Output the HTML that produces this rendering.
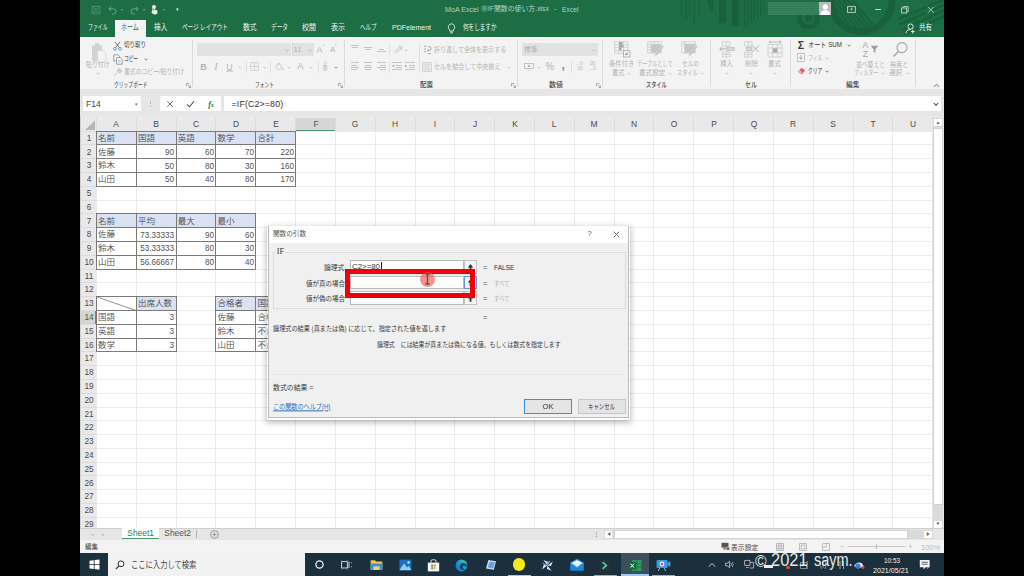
<!DOCTYPE html>
<html lang="ja"><head><meta charset="utf-8"><title>Excel IF</title>
<style>
html,body{margin:0;padding:0;background:#000;}
body{width:1024px;height:576px;overflow:hidden;position:relative;font-family:"Liberation Sans", "Noto Sans CJK JP", sans-serif;}
#root{position:absolute;left:0;top:0;width:1024px;height:576px;overflow:hidden;background:#000;}
.r{position:absolute;box-sizing:border-box;}
.t{position:absolute;white-space:nowrap;line-height:1;}
</style></head>
<body><div id="root">
<div class="r" style="left:80px;top:0px;width:864px;height:576px;background:#e6e6e6;"></div>
<div class="r" style="left:80px;top:0px;width:864px;height:36.5px;background:#1e6e45;"></div>
<div class="r" style="left:80px;top:36.5px;width:864px;height:52px;background:#f3f3f3;"></div>
<svg class="r" style="left:80px;top:0px;overflow:hidden;" width="864" height="36.5" viewBox="0 0 864 36.5"><rect x="600.6" y="0" width="1.1" height="14" fill="#19613d"/><rect x="605.2" y="0" width="1.1" height="19" fill="#19613d"/><rect x="609.0" y="0" width="1.1" height="16" fill="#19613d"/><rect x="613.6" y="0" width="1.3" height="23" fill="#19613d"/><rect x="618.4" y="0" width="1.3" height="16" fill="#19613d"/><rect x="639.0" y="0" width="7" height="23.4" fill="#19613d"/><rect x="652.0" y="0" width="6.8" height="26.5" fill="#19613d"/><rect x="664.0" y="0" width="1.6" height="25.8" fill="#19613d"/><rect x="667.3" y="0" width="1.6" height="24.2" fill="#19613d"/><rect x="670.4" y="0" width="1.6" height="22.7" fill="#19613d"/><rect x="673.4" y="0" width="1.5" height="20.3" fill="#19613d"/><rect x="676.8" y="0" width="1.4" height="18" fill="#19613d"/><rect x="680.0" y="0" width="1.3" height="14.8" fill="#19613d"/><rect x="683.2" y="0" width="1.2" height="11" fill="#19613d"/><path d="M627 0 H633.4 V12.6 Q629 8 627 0 Z" fill="#19613d"/><circle cx="728.4" cy="18" r="9" fill="none" stroke="#19613d" stroke-width="4.6"/><circle cx="728.4" cy="18" r="3.4" fill="#19613d"/><circle cx="781.5" cy="1" r="30.5" fill="none" stroke="#19613d" stroke-width="7"/><clipPath id="cp1"><circle cx="781.5" cy="1" r="26.4"/></clipPath><g clip-path="url(#cp1)"><path d="M746.0 -4 L778.0 35" stroke="#19613d" stroke-width="1.9"/><path d="M750.6 -4 L782.6 35" stroke="#19613d" stroke-width="1.9"/><path d="M755.2 -4 L787.2 35" stroke="#19613d" stroke-width="1.9"/><path d="M759.8 -4 L791.8 35" stroke="#19613d" stroke-width="1.9"/><path d="M764.4 -4 L796.4 35" stroke="#19613d" stroke-width="1.9"/><path d="M769.0 -4 L801.0 35" stroke="#19613d" stroke-width="1.9"/></g><g><path d="M870 -3.0 L818 19.0" stroke="#19613d" stroke-width="2.4"/><path d="M870 2.4 L820 24.4" stroke="#19613d" stroke-width="2.4"/><path d="M870 7.8 L822 29.8" stroke="#19613d" stroke-width="2.4"/><path d="M870 13.2 L824 35.2" stroke="#19613d" stroke-width="2.4"/></g></svg>
<svg class="r" style="left:91px;top:4.5px;" width="10" height="10" viewBox="0 0 10 10"><path d="M1.2 1.4 H8.8 V8.6 H1.2 Z M3 1.4 V4 H7 V1.4 M3 8.6 V6 H7 V8.6" fill="none" stroke="#4f9070" stroke-width="0.9"/></svg>
<svg class="r" style="left:107px;top:4.5px;" width="11" height="10" viewBox="0 0 11 10"><path d="M2 3.8 H6.3 A2.6 2.6 0 0 1 6.3 9 H5.2 M4 1.6 L1.8 3.8 L4 6" fill="none" stroke="#74ab8f" stroke-width="0.9"/></svg>
<span class="t" style="left:122px;top:9.5px;color:#74ab8f;transform:translate(-50%,-50%);transform-origin:50% 50%;font-size:4px;">▾</span>
<svg class="r" style="left:129px;top:4.5px;" width="11" height="10" viewBox="0 0 11 10"><path d="M9 3.8 H4.7 A2.6 2.6 0 0 0 4.7 9 H5.8 M7 1.6 L9.2 3.8 L7 6" fill="none" stroke="#74ab8f" stroke-width="0.9"/></svg>
<span class="t" style="left:144px;top:9.5px;color:#74ab8f;transform:translate(-50%,-50%);transform-origin:50% 50%;font-size:4px;">▾</span>
<svg class="r" style="left:149.5px;top:3.5px;" width="9" height="11" viewBox="0 0 9 11"><circle cx="4" cy="3" r="1.9" fill="#fff"/><path d="M2.6 4.5 V9.2 L1.6 8.4 M2.6 9.2 Q4.5 11 7 9.6 L7 6.6 L4.6 6.2 L4.6 4.5 Z" fill="#f0f5f2" stroke="#f0f5f2" stroke-width="0.7"/></svg>
<span class="t" style="left:163.8px;top:9.5px;color:#74ab8f;transform:translate(-50%,-50%);transform-origin:50% 50%;font-size:4px;">▾</span>
<span class="t" style="left:177px;top:9.8px;color:#e8f1ec;transform:translate(-50%,-50%);transform-origin:50% 50%;font-size:4.5px;">▾</span>
<span class="t" style="left:445px;top:9.6px;color:#b4d2c2;transform:translate(0,-50%) scaleX(0.937);transform-origin:0 50%;font-size:7.6px;">MoA Excel</span>
<span class="t" style="left:481px;top:9.5px;color:#b4d2c2;transform:translate(0,-50%) scaleX(0.969);transform-origin:0 50%;font-size:7.1px;">⑩IF関数の使い方.xlsx</span>
<span class="t" style="left:555.2px;top:9.4px;color:#b4d2c2;transform:translate(-50%,-50%);transform-origin:50% 50%;font-size:7.6px;">-</span>
<span class="t" style="left:561.6px;top:9.6px;color:#b4d2c2;transform:translate(0,-50%) scaleX(0.894);transform-origin:0 50%;font-size:7.6px;">Excel</span>
<div class="r" style="left:767.6px;top:2px;width:51.6px;height:13.4px;background:repeating-linear-gradient(180deg,#2f7a55 0px,#3f8763 1.1px,#2f7a55 2.2px);opacity:.95;"></div>
<div class="r" style="left:819px;top:2.1px;width:12.4px;height:13.4px;background:#bdbdbd;"></div>
<svg class="r" style="left:819px;top:2.1px;" width="12.4" height="13.4" viewBox="0 0 12.4 13.4"><circle cx="6.3" cy="4.8" r="2.6" fill="#fff"/><path d="M1.6 13.2 Q1.6 8 6.3 8 Q11 8 11 13.2 Z" fill="#fff"/></svg>
<svg class="r" style="left:846.5px;top:5.5px;" width="9" height="7" viewBox="0 0 9 7"><rect x="0.6" y="0.6" width="7.8" height="5.8" fill="none" stroke="#bdd7ca" stroke-width="0.9"/><path d="M4.5 4.8 V2.2 M3.2 3.4 L4.5 2.1 L5.8 3.4" stroke="#bdd7ca" stroke-width="0.8" fill="none"/></svg>
<div class="r" style="left:874.5px;top:9px;width:6.5px;height:0.9px;background:#bdd7ca;"></div>
<svg class="r" style="left:900.5px;top:5.5px;" width="8" height="8" viewBox="0 0 8 8"><rect x="0.6" y="2" width="5" height="5" fill="none" stroke="#bdd7ca" stroke-width="0.9"/><path d="M2.2 2 V0.6 H7.2 V5.6 H5.6" fill="none" stroke="#bdd7ca" stroke-width="0.9"/></svg>
<svg class="r" style="left:927px;top:5.5px;" width="8" height="8" viewBox="0 0 8 8"><path d="M0.8 0.8 L6.8 6.8 M6.8 0.8 L0.8 6.8" stroke="#bdd7ca" stroke-width="0.9"/></svg>
<div class="r" style="left:115px;top:19.5px;width:31.2px;height:17.2px;background:#f3f3f3;"></div>
<span class="t" style="left:87.5px;top:28px;color:#eef5f1;transform:translate(0,-50%) scaleX(0.642);transform-origin:0 50%;font-size:7.6px;">ファイル</span>
<span class="t" style="left:121.3px;top:28px;color:#2a7250;transform:translate(0,-50%) scaleX(0.784);transform-origin:0 50%;font-size:7.6px;">ホーム</span>
<span class="t" style="left:153.7px;top:28px;color:#eef5f1;transform:translate(0,-50%) scaleX(0.876);transform-origin:0 50%;font-size:7.6px;">挿入</span>
<span class="t" style="left:182.3px;top:28px;color:#eef5f1;transform:translate(0,-50%) scaleX(0.732);transform-origin:0 50%;font-size:7.6px;">ページ レイアウト</span>
<span class="t" style="left:242.6px;top:28px;color:#eef5f1;transform:translate(0,-50%) scaleX(0.895);transform-origin:0 50%;font-size:7.6px;">数式</span>
<span class="t" style="left:271.2px;top:28px;color:#eef5f1;transform:translate(0,-50%) scaleX(0.746);transform-origin:0 50%;font-size:7.6px;">データ</span>
<span class="t" style="left:302px;top:28px;color:#eef5f1;transform:translate(0,-50%) scaleX(0.922);transform-origin:0 50%;font-size:7.6px;">校閲</span>
<span class="t" style="left:331px;top:28px;color:#eef5f1;transform:translate(0,-50%) scaleX(0.922);transform-origin:0 50%;font-size:7.6px;">表示</span>
<span class="t" style="left:360px;top:28px;color:#eef5f1;transform:translate(0,-50%) scaleX(0.724);transform-origin:0 50%;font-size:7.6px;">ヘルプ</span>
<span class="t" style="left:392px;top:28px;color:#eef5f1;transform:translate(0,-50%) scaleX(0.924);transform-origin:0 50%;font-size:7.6px;">PDFelement</span>
<svg class="r" style="left:446.8px;top:22.6px;" width="9" height="11.5" viewBox="0 0 9 11.5"><path d="M4.5 0.8 A3.4 3.4 0 0 1 6.2 7 V8.2 H2.8 V7 A3.4 3.4 0 0 1 4.5 0.8 Z M3 9.8 H6" fill="none" stroke="#eef5f1" stroke-width="0.85"/></svg>
<span class="t" style="left:463px;top:28px;color:#eef5f1;transform:translate(0,-50%) scaleX(0.735);transform-origin:0 50%;font-size:7.6px;">何をしますか</span>
<svg class="r" style="left:905px;top:23.4px;" width="11" height="11" viewBox="0 0 11 11"><circle cx="5.6" cy="3.6" r="2.6" fill="none" stroke="#eef5f1" stroke-width="0.9"/><path d="M1 10.4 Q1.6 6.4 5.4 6.4 M7.8 6.6 V10.6 M5.8 8.6 H9.8" fill="none" stroke="#eef5f1" stroke-width="0.9"/></svg>
<span class="t" style="left:918.6px;top:28.2px;color:#eef5f1;transform:translate(0,-50%) scaleX(0.856);transform-origin:0 50%;font-size:7.6px;">共有</span>
<div class="r" style="left:192.1px;top:40px;width:1px;height:47px;background:#dadada;"></div>
<div class="r" style="left:344.0px;top:40px;width:1px;height:47px;background:#dadada;"></div>
<div class="r" style="left:516.9px;top:40px;width:1px;height:47px;background:#dadada;"></div>
<div class="r" style="left:601.7px;top:40px;width:1px;height:47px;background:#dadada;"></div>
<div class="r" style="left:709.5px;top:40px;width:1px;height:47px;background:#dadada;"></div>
<div class="r" style="left:790.0px;top:40px;width:1px;height:47px;background:#dadada;"></div>
<div class="r" style="left:915.1px;top:40px;width:1px;height:47px;background:#dadada;"></div>
<svg class="r" style="left:90px;top:41.5px;" width="18" height="22" viewBox="0 0 18 22"><path d="M2 3.5 H12 V19 H2 Z" fill="#d2d2d2"/><path d="M5 1.2 H9 V4.6 H5 Z" fill="#cfcfcf"/><path d="M7.5 8.5 H13.2 L16 11.3 V20.5 H7.5 Z" fill="#f4f4f4" stroke="#d6d6d6" stroke-width="0.8"/></svg>
<span class="t" style="left:86px;top:64.6px;color:#b4b4b4;transform:translate(0,-50%) scaleX(0.795);transform-origin:0 50%;font-size:7.4px;">貼り付け</span>
<svg class="r" style="left:96px;top:72.1px;" width="4" height="3" viewBox="0 0 4 3"><path d="M0.6 0.7 L2 2.2 L3.4 0.7" fill="none" stroke="#c2c2c2" stroke-width="0.75"/></svg>
<svg class="r" style="left:113px;top:40.5px;" width="9" height="10" viewBox="0 0 9 10"><path d="M2 0.8 L6.4 6.6 M7 0.8 L2.6 6.6" stroke="#555" stroke-width="0.8"/><circle cx="2" cy="7.8" r="1.4" fill="none" stroke="#4f86c6" stroke-width="0.8"/><circle cx="7" cy="7.8" r="1.4" fill="none" stroke="#4f86c6" stroke-width="0.8"/></svg>
<span class="t" style="left:124px;top:45.4px;color:#3a3a3a;transform:translate(0,-50%) scaleX(0.744);transform-origin:0 50%;font-size:7.4px;">切り取り</span>
<svg class="r" style="left:113px;top:53.5px;" width="10" height="11" viewBox="0 0 10 11"><path d="M0.8 0.8 H5 L6.4 2.2 V7 H0.8 Z" fill="#fff" stroke="#777" stroke-width="0.7"/><path d="M3.6 3.6 H7.6 L9.2 5.2 V10.2 H3.6 Z" fill="#fff" stroke="#777" stroke-width="0.7"/><path d="M5 6.4 H7.8 M5 8 H7.8" stroke="#6a9bd1" stroke-width="0.6"/></svg>
<span class="t" style="left:124px;top:59px;color:#3a3a3a;transform:translate(0,-50%) scaleX(0.631);transform-origin:0 50%;font-size:7.4px;">コピー</span>
<svg class="r" style="left:144.4px;top:58.0px;" width="4" height="3" viewBox="0 0 4 3"><path d="M0.6 0.7 L2 2.2 L3.4 0.7" fill="none" stroke="#666" stroke-width="0.75"/></svg>
<svg class="r" style="left:113px;top:66.5px;" width="10" height="10" viewBox="0 0 10 10"><path d="M1 8.8 L4.6 5.2 M4 3.4 L6.8 6.2 L9 4 L6.2 1.2 Z" fill="#cfcfcf" stroke="#bdbdbd" stroke-width="0.8"/></svg>
<span class="t" style="left:124px;top:72px;color:#b4b4b4;transform:translate(0,-50%) scaleX(0.790);transform-origin:0 50%;font-size:7.4px;">書式のコピー/貼り付け</span>
<span class="t" style="left:114px;top:85px;color:#4a4a4a;transform:translate(0,-50%) scaleX(0.647);transform-origin:0 50%;font-size:7.4px;">クリップボード</span>
<svg class="r" style="left:185.5px;top:83.0px;" width="5" height="5" viewBox="0 0 5 5"><path d="M0.5 3.2 V0.5 H3.2 M2 2 L4.4 4.4 M4.5 2.6 V4.5 H2.6" stroke="#8a8a8a" stroke-width="0.7" fill="none"/></svg>
<div class="r" style="left:197.2px;top:42.8px;width:94px;height:13.6px;background:#e2e2e2;"></div>
<div class="r" style="left:291.7px;top:42.8px;width:22px;height:13.6px;background:#e2e2e2;border-left:1px solid #d4d4d4;"></div>
<svg class="r" style="left:284.5px;top:48.6px;" width="4" height="3" viewBox="0 0 4 3"><path d="M0.6 0.7 L2 2.2 L3.4 0.7" fill="none" stroke="#b4b4b4" stroke-width="0.75"/></svg>
<span class="t" style="left:293.6px;top:50px;color:#b4b4b4;transform:translate(0,-50%);transform-origin:0 50%;font-size:7.800000000000001px;">11</span>
<svg class="r" style="left:307.5px;top:48.6px;" width="4" height="3" viewBox="0 0 4 3"><path d="M0.6 0.7 L2 2.2 L3.4 0.7" fill="none" stroke="#b4b4b4" stroke-width="0.75"/></svg>
<span class="t" style="left:319.6px;top:50px;color:#b4b4b4;transform:translate(-50%,-50%);transform-origin:50% 50%;font-size:9px;">A</span>
<span class="t" style="left:323.5px;top:46px;color:#b4b4b4;transform:translate(-50%,-50%);transform-origin:50% 50%;font-size:3.2px;">▴</span>
<span class="t" style="left:332.6px;top:50.4px;color:#b4b4b4;transform:translate(-50%,-50%);transform-origin:50% 50%;font-size:8px;">A</span>
<span class="t" style="left:336.4px;top:46px;color:#b4b4b4;transform:translate(-50%,-50%);transform-origin:50% 50%;font-size:3.2px;">▾</span>
<span class="t" style="left:203.4px;top:66.8px;color:#b4b4b4;transform:translate(-50%,-50%);transform-origin:50% 50%;font-size:9px;font-weight:bold;">B</span>
<span class="t" style="left:216px;top:66.8px;color:#b4b4b4;transform:translate(-50%,-50%);transform-origin:50% 50%;font-size:9px;font-family:'Liberation Serif',serif;font-style:italic;font-size:10px;">I</span>
<span class="t" style="left:229.6px;top:66.5px;color:#b4b4b4;transform:translate(-50%,-50%);transform-origin:50% 50%;font-size:9px;text-decoration:underline;">U</span>
<svg class="r" style="left:238px;top:66.0px;" width="4" height="3" viewBox="0 0 4 3"><path d="M0.6 0.7 L2 2.2 L3.4 0.7" fill="none" stroke="#c2c2c2" stroke-width="0.75"/></svg>
<div class="r" style="left:245.5px;top:61px;width:1px;height:12px;background:#e0e0e0;"></div>
<svg class="r" style="left:249.5px;top:62.3px;" width="9" height="9" viewBox="0 0 9 9"><path d="M0.6 0.6 H8.4 V8.4 H0.6 Z M4.5 0.6 V8.4 M0.6 4.5 H8.4" fill="none" stroke="#cdcdcd" stroke-width="0.8"/></svg>
<svg class="r" style="left:262.5px;top:66.0px;" width="4" height="3" viewBox="0 0 4 3"><path d="M0.6 0.7 L2 2.2 L3.4 0.7" fill="none" stroke="#c2c2c2" stroke-width="0.75"/></svg>
<div class="r" style="left:270.0px;top:61px;width:1px;height:12px;background:#e0e0e0;"></div>
<svg class="r" style="left:274px;top:61.5px;" width="10" height="10" viewBox="0 0 10 10"><path d="M4.6 1 L8.2 4.8 L4.6 8 L1.4 4.8 Z M4.6 1 V3.2 M8.6 6 Q9.6 7.6 8.6 8.2 Q7.6 7.6 8.6 6" fill="none" stroke="#c2c2c2" stroke-width="0.8"/></svg>
<svg class="r" style="left:287px;top:66.0px;" width="4" height="3" viewBox="0 0 4 3"><path d="M0.6 0.7 L2 2.2 L3.4 0.7" fill="none" stroke="#c2c2c2" stroke-width="0.75"/></svg>
<span class="t" style="left:300.5px;top:66.39999999999999px;color:#b4b4b4;transform:translate(-50%,-50%);transform-origin:50% 50%;font-size:9.4px;">A</span>
<svg class="r" style="left:308.8px;top:66.0px;" width="4" height="3" viewBox="0 0 4 3"><path d="M0.6 0.7 L2 2.2 L3.4 0.7" fill="none" stroke="#c2c2c2" stroke-width="0.75"/></svg>
<div class="r" style="left:317.5px;top:61px;width:1px;height:12px;background:#e0e0e0;"></div>
<span class="t" style="left:325px;top:63.5px;color:#b4b4b4;transform:translate(-50%,-50%);transform-origin:50% 50%;font-size:4.2px;">ア</span>
<span class="t" style="left:325px;top:69.4px;color:#b4b4b4;transform:translate(-50%,-50%);transform-origin:50% 50%;font-size:5.2px;">亜</span>
<svg class="r" style="left:333.6px;top:66.0px;" width="4" height="3" viewBox="0 0 4 3"><path d="M0.6 0.7 L2 2.2 L3.4 0.7" fill="none" stroke="#666" stroke-width="0.75"/></svg>
<span class="t" style="left:254.6px;top:85px;color:#4a4a4a;transform:translate(0,-50%) scaleX(0.642);transform-origin:0 50%;font-size:7.4px;">フォント</span>
<svg class="r" style="left:337.5px;top:83.0px;" width="5" height="5" viewBox="0 0 5 5"><path d="M0.5 3.2 V0.5 H3.2 M2 2 L4.4 4.4 M4.5 2.6 V4.5 H2.6" stroke="#8a8a8a" stroke-width="0.7" fill="none"/></svg>
<div class="r" style="left:350.6px;top:45.0px;width:8.6px;height:0.9px;background:#c4c4c4;"></div>
<div class="r" style="left:352.20000000000005px;top:47.1px;width:5.4px;height:0.9px;background:#c4c4c4;"></div>
<div class="r" style="left:363.8px;top:47.1px;width:8.6px;height:0.9px;background:#c4c4c4;"></div>
<div class="r" style="left:365.40000000000003px;top:49.2px;width:5.4px;height:0.9px;background:#c4c4c4;"></div>
<div class="r" style="left:378.6px;top:49.2px;width:5.4px;height:0.9px;background:#c4c4c4;"></div>
<div class="r" style="left:377px;top:51.300000000000004px;width:8.6px;height:0.9px;background:#c4c4c4;"></div>
<div class="r" style="left:388.5px;top:43px;width:1px;height:12px;background:#e0e0e0;"></div>
<svg class="r" style="left:392.5px;top:44.5px;" width="10" height="9" viewBox="0 0 10 9"><path d="M1 7.6 L6.6 2 M3 8.4 L8.2 3.2 M6 1.2 L9 2 L8.2 5" fill="none" stroke="#bdbdbd" stroke-width="0.9"/></svg>
<svg class="r" style="left:404px;top:48.6px;" width="4" height="3" viewBox="0 0 4 3"><path d="M0.6 0.7 L2 2.2 L3.4 0.7" fill="none" stroke="#c2c2c2" stroke-width="0.75"/></svg>
<div class="r" style="left:418.5px;top:43px;width:1px;height:30px;background:#e0e0e0;"></div>
<div class="r" style="left:350.6px;top:62.4px;width:8.6px;height:0.9px;background:#c4c4c4;"></div>
<div class="r" style="left:350.6px;top:64.5px;width:6px;height:0.9px;background:#c4c4c4;"></div>
<div class="r" style="left:350.6px;top:66.6px;width:8.6px;height:0.9px;background:#c4c4c4;"></div>
<div class="r" style="left:350.6px;top:68.7px;width:6px;height:0.9px;background:#c4c4c4;"></div>
<div class="r" style="left:363.8px;top:62.4px;width:8.6px;height:0.9px;background:#c4c4c4;"></div>
<div class="r" style="left:365.1px;top:64.5px;width:6px;height:0.9px;background:#c4c4c4;"></div>
<div class="r" style="left:363.8px;top:66.6px;width:8.6px;height:0.9px;background:#c4c4c4;"></div>
<div class="r" style="left:365.1px;top:68.7px;width:6px;height:0.9px;background:#c4c4c4;"></div>
<div class="r" style="left:377px;top:62.4px;width:8.6px;height:0.9px;background:#c4c4c4;"></div>
<div class="r" style="left:379.6px;top:64.5px;width:6px;height:0.9px;background:#c4c4c4;"></div>
<div class="r" style="left:377px;top:66.6px;width:8.6px;height:0.9px;background:#c4c4c4;"></div>
<div class="r" style="left:379.6px;top:68.7px;width:6px;height:0.9px;background:#c4c4c4;"></div>
<div class="r" style="left:388.5px;top:61px;width:1px;height:12px;background:#e0e0e0;"></div>
<div class="r" style="left:396.0px;top:62.4px;width:5.6px;height:0.9px;background:#c4c4c4;"></div>
<div class="r" style="left:396.0px;top:64.5px;width:5.6px;height:0.9px;background:#c4c4c4;"></div>
<div class="r" style="left:396.0px;top:66.6px;width:5.6px;height:0.9px;background:#c4c4c4;"></div>
<div class="r" style="left:396.0px;top:68.7px;width:5.6px;height:0.9px;background:#c4c4c4;"></div>
<div class="r" style="left:392.0px;top:62.4px;width:9.6px;height:0.9px;background:#c4c4c4;"></div>
<div class="r" style="left:392.0px;top:68.7px;width:9.6px;height:0.9px;background:#c4c4c4;"></div>
<span class="t" style="left:393.40000000000003px;top:66.0px;color:#6f8fb8;transform:translate(-50%,-50%);transform-origin:50% 50%;font-size:4.4px;">◂</span>
<div class="r" style="left:409.0px;top:62.4px;width:5.6px;height:0.9px;background:#c4c4c4;"></div>
<div class="r" style="left:409.0px;top:64.5px;width:5.6px;height:0.9px;background:#c4c4c4;"></div>
<div class="r" style="left:409.0px;top:66.6px;width:5.6px;height:0.9px;background:#c4c4c4;"></div>
<div class="r" style="left:409.0px;top:68.7px;width:5.6px;height:0.9px;background:#c4c4c4;"></div>
<div class="r" style="left:405.0px;top:62.4px;width:9.6px;height:0.9px;background:#c4c4c4;"></div>
<div class="r" style="left:405.0px;top:68.7px;width:9.6px;height:0.9px;background:#c4c4c4;"></div>
<span class="t" style="left:406.40000000000003px;top:66.0px;color:#6f8fb8;transform:translate(-50%,-50%);transform-origin:50% 50%;font-size:4.4px;">▸</span>
<svg class="r" style="left:422.5px;top:44.5px;" width="9" height="10" viewBox="0 0 9 10"><path d="M1 1.2 H3.4 M1 4 H3 M1 6.8 H3.4 M5 1.6 H6.2 A1.7 1.7 0 0 1 6.2 5.4 H4.6 M5.6 4.2 L4.4 5.4 L5.6 6.6 M5 8.6 H8" fill="none" stroke="#9f9f9f" stroke-width="0.9"/></svg>
<span class="t" style="left:434px;top:49.8px;color:#b4b4b4;transform:translate(0,-50%) scaleX(0.816);transform-origin:0 50%;font-size:7.4px;">折り返して全体を表示する</span>
<svg class="r" style="left:422px;top:62px;" width="10" height="10" viewBox="0 0 10 10"><path d="M0.6 0.6 H9.4 V9.4 H0.6 Z M0.6 3 H9.4 M0.6 7 H9.4 M3.6 0.6 V3 M6.6 0.6 V3 M3.6 7 V9.4 M6.6 7 V9.4" fill="none" stroke="#c4c4c4" stroke-width="0.7"/><path d="M2.4 5 H7.6" stroke="#bdbdbd" stroke-width="0.8"/></svg>
<span class="t" style="left:434px;top:67px;color:#b4b4b4;transform:translate(0,-50%) scaleX(0.820);transform-origin:0 50%;font-size:7.4px;">セルを結合して中央揃え</span>
<svg class="r" style="left:506.6px;top:66.0px;" width="4" height="3" viewBox="0 0 4 3"><path d="M0.6 0.7 L2 2.2 L3.4 0.7" fill="none" stroke="#c2c2c2" stroke-width="0.75"/></svg>
<span class="t" style="left:419.5px;top:85px;color:#4a4a4a;transform:translate(0,-50%) scaleX(0.885);transform-origin:0 50%;font-size:7.4px;font-weight:500;">配置</span>
<svg class="r" style="left:510.5px;top:83.0px;" width="5" height="5" viewBox="0 0 5 5"><path d="M0.5 3.2 V0.5 H3.2 M2 2 L4.4 4.4 M4.5 2.6 V4.5 H2.6" stroke="#8a8a8a" stroke-width="0.7" fill="none"/></svg>
<div class="r" style="left:522px;top:42.8px;width:76px;height:13.6px;background:#e2e2e2;"></div>
<span class="t" style="left:524px;top:49.8px;color:#b4b4b4;transform:translate(0,-50%) scaleX(0.906);transform-origin:0 50%;font-size:7.4px;">標準</span>
<svg class="r" style="left:591.5px;top:48.6px;" width="4" height="3" viewBox="0 0 4 3"><path d="M0.6 0.7 L2 2.2 L3.4 0.7" fill="none" stroke="#b4b4b4" stroke-width="0.75"/></svg>
<svg class="r" style="left:523.6px;top:62.6px;" width="10" height="8" viewBox="0 0 10 8"><rect x="0.5" y="0.5" width="9" height="5" fill="none" stroke="#b9b9b9" stroke-width="0.8"/><circle cx="5" cy="3" r="1.2" fill="#b9b9b9"/><path d="M3.4 7.4 H6.6" stroke="#cdcdcd" stroke-width="0.8"/></svg>
<svg class="r" style="left:537px;top:66.0px;" width="4" height="3" viewBox="0 0 4 3"><path d="M0.6 0.7 L2 2.2 L3.4 0.7" fill="none" stroke="#c2c2c2" stroke-width="0.75"/></svg>
<span class="t" style="left:550.2px;top:67.0px;color:#b4b4b4;transform:translate(-50%,-50%) scaleX(0.92);transform-origin:50% 50%;font-size:10.2px;">%</span>
<span class="t" style="left:563.2px;top:64.6px;color:#8a8a8a;transform:translate(-50%,-50%);transform-origin:50% 50%;font-size:12px;font-weight:bold;">,</span>
<div class="r" style="left:570.5px;top:61px;width:1px;height:12px;background:#e0e0e0;"></div>
<span class="t" style="left:579.2px;top:64.2px;color:#b4b4b4;transform:translate(-50%,-50%);transform-origin:50% 50%;font-size:4.6px;"><span style="font-size:3.6px">←</span>.0</span>
<span class="t" style="left:579.6px;top:69.4px;color:#b4b4b4;transform:translate(-50%,-50%);transform-origin:50% 50%;font-size:4.6px;">.00</span>
<span class="t" style="left:592.2px;top:64.2px;color:#b4b4b4;transform:translate(-50%,-50%);transform-origin:50% 50%;font-size:4.6px;">.00</span>
<span class="t" style="left:592.2px;top:69.4px;color:#b4b4b4;transform:translate(-50%,-50%);transform-origin:50% 50%;font-size:4.6px;"><span style="font-size:3.6px">→</span>.0</span>
<span class="t" style="left:548.5px;top:85px;color:#4a4a4a;transform:translate(0,-50%) scaleX(0.939);transform-origin:0 50%;font-size:7.4px;font-weight:500;">数値</span>
<svg class="r" style="left:595.5px;top:83.0px;" width="5" height="5" viewBox="0 0 5 5"><path d="M0.5 3.2 V0.5 H3.2 M2 2 L4.4 4.4 M4.5 2.6 V4.5 H2.6" stroke="#8a8a8a" stroke-width="0.7" fill="none"/></svg>
<svg class="r" style="left:613.6px;top:40.6px;" width="17" height="17" viewBox="0 0 17 17"><path d="M0.6 0.6 H14 V12.4 H0.6 Z M0.6 3.6 H14 M0.6 6.6 H14 M0.6 9.6 H14 M5 0.6 V12.4 M9.6 0.6 V12.4" fill="none" stroke="#c9c9c9" stroke-width="0.7"/><path d="M5 1 H8.4 V3.4 H5 Z M5 3.8 H9.4 V6.4 H5 Z M5 6.8 H7.4 V9.4 H5 Z" fill="#a8a8a8"/><rect x="9.4" y="9.8" width="6.6" height="6.2" fill="#f6f6f6" stroke="#9a9a9a" stroke-width="0.7"/><path d="M11 14.4 L14.4 11.2 M11.4 12.6 H14 M11.4 13.6 H14" stroke="#8a8a8a" stroke-width="0.6"/></svg>
<svg class="r" style="left:647px;top:41.4px;" width="17" height="17" viewBox="0 0 17 17"><path d="M0.6 0.6 H14.4 V12 H0.6 Z M0.6 3.4 H14.4 M0.6 6.2 H14.4 M0.6 9 H14.4 M4 0.6 V12 M7.6 0.6 V12 M11 0.6 V12" fill="none" stroke="#c9c9c9" stroke-width="0.7"/><path d="M4.2 3.6 H14.2 V11.8 H4.2 Z" fill="#c6c6c6"/><path d="M16 4 L10.4 10.4 L8 13.4 L7 15.4 L9.4 14.4 L12 12 L16.6 5.4 Z" fill="#bdbdbd" stroke="#f3f3f3" stroke-width="0.5"/></svg>
<svg class="r" style="left:681.4px;top:40.8px;" width="17" height="17" viewBox="0 0 17 17"><path d="M0.6 0.6 H14.4 V12 H0.6 Z M0.6 3 H14.4 M3.4 0.6 V12" fill="none" stroke="#c9c9c9" stroke-width="0.7"/><path d="M3.6 3.2 H14.2 V11.8 H3.6 Z" fill="#c6c6c6"/><path d="M16 4 L10.4 10.4 L8 13.4 L7 15.4 L9.4 14.4 L12 12 L16.6 5.4 Z" fill="#bdbdbd" stroke="#f3f3f3" stroke-width="0.5"/></svg>
<span class="t" style="left:608.6px;top:64.4px;color:#b4b4b4;transform:translate(0,-50%) scaleX(0.859);transform-origin:0 50%;font-size:7.4px;">条件付き</span>
<span class="t" style="left:612px;top:72.8px;color:#b4b4b4;transform:translate(0,-50%) scaleX(0.852);transform-origin:0 50%;font-size:7.4px;">書式</span>
<svg class="r" style="left:627.4px;top:71.8px;" width="4" height="3" viewBox="0 0 4 3"><path d="M0.6 0.7 L2 2.2 L3.4 0.7" fill="none" stroke="#c2c2c2" stroke-width="0.75"/></svg>
<span class="t" style="left:637.4px;top:64.4px;color:#b4b4b4;transform:translate(0,-50%) scaleX(0.697);transform-origin:0 50%;font-size:7.4px;">テーブルとして</span>
<span class="t" style="left:638.6px;top:72.8px;color:#b4b4b4;transform:translate(0,-50%) scaleX(0.893);transform-origin:0 50%;font-size:7.4px;">書式設定</span>
<svg class="r" style="left:668.4px;top:71.8px;" width="4" height="3" viewBox="0 0 4 3"><path d="M0.6 0.7 L2 2.2 L3.4 0.7" fill="none" stroke="#c2c2c2" stroke-width="0.75"/></svg>
<span class="t" style="left:682px;top:64.4px;color:#b4b4b4;transform:translate(0,-50%) scaleX(0.766);transform-origin:0 50%;font-size:7.4px;">セルの</span>
<span class="t" style="left:677px;top:72.8px;color:#b4b4b4;transform:translate(0,-50%) scaleX(0.696);transform-origin:0 50%;font-size:7.4px;">スタイル</span>
<svg class="r" style="left:700px;top:71.8px;" width="4" height="3" viewBox="0 0 4 3"><path d="M0.6 0.7 L2 2.2 L3.4 0.7" fill="none" stroke="#c2c2c2" stroke-width="0.75"/></svg>
<span class="t" style="left:645.6px;top:85px;color:#4a4a4a;transform:translate(0,-50%) scaleX(0.696);transform-origin:0 50%;font-size:7.4px;font-weight:500;">スタイル</span>
<svg class="r" style="left:719px;top:41px;" width="16" height="17" viewBox="0 0 16 17"><path d="M3.4 0.8 H11 V5 H3.4 Z M7.2 0.8 V5 M3.4 11 H11 V16 H3.4 Z M7.2 11 V16 M3.4 13.4 H11" fill="none" stroke="#c6c6c6" stroke-width="0.7"/><rect x="7.6" y="6.2" width="7.6" height="3.4" fill="#d8d8d8" stroke="#b5b5b5" stroke-width="0.6"/><path d="M7 7.9 H1 M3 5.8 L0.8 7.9 L3 10" fill="none" stroke="#ababab" stroke-width="0.9"/></svg>
<svg class="r" style="left:743px;top:41px;" width="17" height="17" viewBox="0 0 17 17"><path d="M1.4 0.8 H9 V5 H1.4 Z M5.2 0.8 V5 M1.4 11 H9 V16 H1.4 Z M5.2 11 V16 M1.4 13.4 H9" fill="none" stroke="#c6c6c6" stroke-width="0.7"/><rect x="3.4" y="6.2" width="5.6" height="3.4" fill="#d8d8d8" stroke="#b5b5b5" stroke-width="0.6"/><path d="M9.4 4.6 L15.8 11 M15.8 4.6 L9.4 11" stroke="#b0b0b0" stroke-width="1"/></svg>
<svg class="r" style="left:766.6px;top:40.4px;" width="16" height="18" viewBox="0 0 16 18"><path d="M1 4.4 H15 V17 H1 Z M1 8 H15 M1 13 H15 M5.4 4.4 V17 M10.6 4.4 V17" fill="none" stroke="#c6c6c6" stroke-width="0.7"/><rect x="5.8" y="8.4" width="4.4" height="4.2" fill="#a9a9a9"/><path d="M2 2 H14 M3.6 0.6 L2 2 L3.6 3.4 M12.4 0.6 L14 2 L12.4 3.4" fill="none" stroke="#ababab" stroke-width="0.8"/></svg>
<span class="t" style="left:720.4px;top:64.2px;color:#b4b4b4;transform:translate(0,-50%) scaleX(0.879);transform-origin:0 50%;font-size:7.4px;">挿入</span>
<svg class="r" style="left:725px;top:71.8px;" width="4" height="3" viewBox="0 0 4 3"><path d="M0.6 0.7 L2 2.2 L3.4 0.7" fill="none" stroke="#c2c2c2" stroke-width="0.75"/></svg>
<span class="t" style="left:744.6px;top:64.2px;color:#b4b4b4;transform:translate(0,-50%) scaleX(0.879);transform-origin:0 50%;font-size:7.4px;">削除</span>
<svg class="r" style="left:749.2px;top:71.8px;" width="4" height="3" viewBox="0 0 4 3"><path d="M0.6 0.7 L2 2.2 L3.4 0.7" fill="none" stroke="#c2c2c2" stroke-width="0.75"/></svg>
<span class="t" style="left:768px;top:64.2px;color:#b4b4b4;transform:translate(0,-50%) scaleX(0.879);transform-origin:0 50%;font-size:7.4px;">書式</span>
<svg class="r" style="left:772.5px;top:71.8px;" width="4" height="3" viewBox="0 0 4 3"><path d="M0.6 0.7 L2 2.2 L3.4 0.7" fill="none" stroke="#c2c2c2" stroke-width="0.75"/></svg>
<span class="t" style="left:744.6px;top:85.2px;color:#4a4a4a;transform:translate(0,-50%) scaleX(0.811);transform-origin:0 50%;font-size:7.4px;font-weight:500;">セル</span>
<span class="t" style="left:801px;top:44.6px;color:#3c3c3c;transform:translate(-50%,-50%);transform-origin:50% 50%;font-size:10.5px;font-weight:bold;">Σ</span>
<span class="t" style="left:808px;top:45px;color:#3a3a3a;transform:translate(0,-50%) scaleX(0.836);transform-origin:0 50%;font-size:7.4px;">オート SUM</span>
<svg class="r" style="left:846.6px;top:44.0px;" width="4" height="3" viewBox="0 0 4 3"><path d="M0.6 0.7 L2 2.2 L3.4 0.7" fill="none" stroke="#666" stroke-width="0.75"/></svg>
<svg class="r" style="left:797px;top:53.4px;" width="8" height="9" viewBox="0 0 8 9"><rect x="0.5" y="0.5" width="7" height="8" fill="#f8f8f8" stroke="#b4b4b4" stroke-width="0.8"/><path d="M4 2 V6.2 M2.2 4.6 L4 6.4 L5.8 4.6" fill="none" stroke="#9a9a9a" stroke-width="0.9"/></svg>
<span class="t" style="left:808px;top:58.2px;color:#b4b4b4;transform:translate(0,-50%) scaleX(0.654);transform-origin:0 50%;font-size:7.4px;">フィル</span>
<svg class="r" style="left:824.6px;top:57.2px;" width="4" height="3" viewBox="0 0 4 3"><path d="M0.6 0.7 L2 2.2 L3.4 0.7" fill="none" stroke="#c2c2c2" stroke-width="0.75"/></svg>
<svg class="r" style="left:796.6px;top:67px;" width="9" height="8" viewBox="0 0 9 8"><path d="M3.4 7 L0.8 4.4 L4.6 0.8 L8.2 3.6 L5 7 Z" fill="#e2616e"/><path d="M3.4 7 L0.8 4.4 L2.4 3 L5.2 5.6 Z" fill="#f3b3ba"/></svg>
<span class="t" style="left:808px;top:71.2px;color:#3a3a3a;transform:translate(0,-50%) scaleX(0.649);transform-origin:0 50%;font-size:7.4px;">クリア</span>
<svg class="r" style="left:825px;top:70.2px;" width="4" height="3" viewBox="0 0 4 3"><path d="M0.6 0.7 L2 2.2 L3.4 0.7" fill="none" stroke="#555" stroke-width="0.75"/></svg>
<span class="t" style="left:865.4px;top:45px;color:#a8a8a8;transform:translate(-50%,-50%);transform-origin:50% 50%;font-size:8.6px;">A</span>
<span class="t" style="left:865.4px;top:53.6px;color:#a8a8a8;transform:translate(-50%,-50%);transform-origin:50% 50%;font-size:8.6px;">Z</span>
<svg class="r" style="left:869.6px;top:45px;" width="9" height="9" viewBox="0 0 9 9"><path d="M0.6 0.8 H8.4 L5.4 4.2 V8 L3.6 6.8 V4.2 Z" fill="#9d9d9d"/></svg>
<span class="t" style="left:856px;top:64.6px;color:#b4b4b4;transform:translate(0,-50%) scaleX(0.784);transform-origin:0 50%;font-size:7.4px;">並べ替えと</span>
<span class="t" style="left:854.4px;top:72.8px;color:#b4b4b4;transform:translate(0,-50%) scaleX(0.657);transform-origin:0 50%;font-size:7.4px;">フィルター</span>
<svg class="r" style="left:881.4px;top:71.8px;" width="4" height="3" viewBox="0 0 4 3"><path d="M0.6 0.7 L2 2.2 L3.4 0.7" fill="none" stroke="#c2c2c2" stroke-width="0.75"/></svg>
<svg class="r" style="left:891.6px;top:40.6px;" width="17" height="17" viewBox="0 0 17 17"><circle cx="10" cy="6.6" r="5" fill="none" stroke="#a6a6a6" stroke-width="1.1"/><path d="M6.4 10.4 L1.4 15.6" stroke="#a6a6a6" stroke-width="1.5"/></svg>
<span class="t" style="left:890px;top:64.6px;color:#b4b4b4;transform:translate(0,-50%) scaleX(0.829);transform-origin:0 50%;font-size:7.4px;">検索と</span>
<span class="t" style="left:889.4px;top:72.8px;color:#b4b4b4;transform:translate(0,-50%) scaleX(0.892);transform-origin:0 50%;font-size:7.4px;">選択</span>
<svg class="r" style="left:905.6px;top:71.8px;" width="4" height="3" viewBox="0 0 4 3"><path d="M0.6 0.7 L2 2.2 L3.4 0.7" fill="none" stroke="#c2c2c2" stroke-width="0.75"/></svg>
<span class="t" style="left:846px;top:85.2px;color:#4a4a4a;transform:translate(0,-50%) scaleX(0.906);transform-origin:0 50%;font-size:7.4px;font-weight:500;">編集</span>
<svg class="r" style="left:932.6px;top:83.4px;" width="7" height="5" viewBox="0 0 7 5"><path d="M0.8 4 L3.5 1.2 L6.2 4" fill="none" stroke="#666" stroke-width="0.9"/></svg>
<div class="r" style="left:83px;top:96px;width:58px;height:15px;background:#fff;"></div>
<span class="t" style="left:86px;top:104px;color:#444;transform:translate(0,-50%);transform-origin:0 50%;font-size:8.5px;">F14</span>
<span class="t" style="left:136.5px;top:103.5px;color:#777;transform:translate(-50%,-50%);transform-origin:50% 50%;font-size:5px;">▾</span>
<div class="r" style="left:149.6px;top:100.6px;width:0.9px;height:0.9px;background:#aaa;"></div>
<div class="r" style="left:149.6px;top:103.1px;width:0.9px;height:0.9px;background:#aaa;"></div>
<div class="r" style="left:149.6px;top:105.6px;width:0.9px;height:0.9px;background:#aaa;"></div>
<div class="r" style="left:160px;top:96px;width:61px;height:15px;background:#fff;"></div>
<svg class="r" style="left:165.5px;top:99.5px;" width="8" height="8" viewBox="0 0 8 8"><path d="M1.2 1.2 L6.8 6.8 M6.8 1.2 L1.2 6.8" stroke="#666" stroke-width="0.9" fill="none"/></svg>
<svg class="r" style="left:186px;top:99.5px;" width="9" height="8" viewBox="0 0 9 8"><path d="M1 4.4 L3.4 6.8 L8 1.4" stroke="#555" stroke-width="1.1" fill="none"/></svg>
<span class="t" style="left:211px;top:103.5px;color:#2b7a54;transform:translate(-50%,-50%);transform-origin:50% 50%;font-size:8.5px;font-family:'Liberation Serif',serif;font-weight:bold;"><i>f</i><span style="font-size:5.5px">x</span></span>
<div class="r" style="left:224px;top:96px;width:717px;height:15px;background:#fff;"></div>
<span class="t" style="left:231.5px;top:104px;color:#333;transform:translate(0,-50%);transform-origin:0 50%;font-size:8.8px;letter-spacing:0.15px;">=IF(C2&gt;=80)</span>
<svg class="r" style="left:933px;top:101.6px;" width="6" height="5" viewBox="0 0 6 5"><path d="M0.8 1 L3 3.4 L5.2 1" fill="none" stroke="#555" stroke-width="1.1"/></svg>
<div class="r" style="left:80px;top:115.5px;width:852px;height:412.5px;background:#fff;"></div>
<div class="r" style="left:80px;top:115.5px;width:852px;height:15.699999999999989px;background:#e9e9e9;"></div>
<div class="r" style="left:80px;top:115.5px;width:16.5px;height:412.5px;background:#e9e9e9;"></div>
<div class="r" style="left:80px;top:115.5px;width:1.3px;height:412.5px;background:#d0d0d0;"></div>
<svg class="r" style="left:84px;top:120px;" width="12" height="11" viewBox="0 0 12 11"><path d="M11 0.5 L11 10 L1 10 Z" fill="#b5b5b5"/></svg>
<div class="r" style="left:295.6px;top:117.5px;width:39.82px;height:13.699999999999989px;background:#d6d6d6;"></div>
<div class="r" style="left:295.6px;top:129.89999999999998px;width:39.82px;height:1.3px;background:#4f9573;"></div>
<div class="r" style="left:81.3px;top:310.46999999999997px;width:15.2px;height:13.79px;background:#d5d5d5;"></div>
<div class="r" style="left:95.3px;top:310.46999999999997px;width:1.2px;height:13.79px;background:#4f9573;"></div>
<div class="r" style="left:96.00px;top:131.2px;width:1px;height:396.8px;background:#ececec"></div>
<div class="r" style="left:96.00px;top:117px;width:1px;height:14.199999999999989px;background:#dcdcdc"></div>
<div class="r" style="left:135.82px;top:131.2px;width:1px;height:396.8px;background:#ececec"></div>
<div class="r" style="left:135.82px;top:117px;width:1px;height:14.199999999999989px;background:#dcdcdc"></div>
<div class="r" style="left:175.64px;top:131.2px;width:1px;height:396.8px;background:#ececec"></div>
<div class="r" style="left:175.64px;top:117px;width:1px;height:14.199999999999989px;background:#dcdcdc"></div>
<div class="r" style="left:215.46px;top:131.2px;width:1px;height:396.8px;background:#ececec"></div>
<div class="r" style="left:215.46px;top:117px;width:1px;height:14.199999999999989px;background:#dcdcdc"></div>
<div class="r" style="left:255.28px;top:131.2px;width:1px;height:396.8px;background:#ececec"></div>
<div class="r" style="left:255.28px;top:117px;width:1px;height:14.199999999999989px;background:#dcdcdc"></div>
<div class="r" style="left:295.10px;top:131.2px;width:1px;height:396.8px;background:#ececec"></div>
<div class="r" style="left:295.10px;top:117px;width:1px;height:14.199999999999989px;background:#dcdcdc"></div>
<div class="r" style="left:334.92px;top:131.2px;width:1px;height:396.8px;background:#ececec"></div>
<div class="r" style="left:334.92px;top:117px;width:1px;height:14.199999999999989px;background:#dcdcdc"></div>
<div class="r" style="left:374.74px;top:131.2px;width:1px;height:396.8px;background:#ececec"></div>
<div class="r" style="left:374.74px;top:117px;width:1px;height:14.199999999999989px;background:#dcdcdc"></div>
<div class="r" style="left:414.56px;top:131.2px;width:1px;height:396.8px;background:#ececec"></div>
<div class="r" style="left:414.56px;top:117px;width:1px;height:14.199999999999989px;background:#dcdcdc"></div>
<div class="r" style="left:454.38px;top:131.2px;width:1px;height:396.8px;background:#ececec"></div>
<div class="r" style="left:454.38px;top:117px;width:1px;height:14.199999999999989px;background:#dcdcdc"></div>
<div class="r" style="left:494.20px;top:131.2px;width:1px;height:396.8px;background:#ececec"></div>
<div class="r" style="left:494.20px;top:117px;width:1px;height:14.199999999999989px;background:#dcdcdc"></div>
<div class="r" style="left:534.02px;top:131.2px;width:1px;height:396.8px;background:#ececec"></div>
<div class="r" style="left:534.02px;top:117px;width:1px;height:14.199999999999989px;background:#dcdcdc"></div>
<div class="r" style="left:573.84px;top:131.2px;width:1px;height:396.8px;background:#ececec"></div>
<div class="r" style="left:573.84px;top:117px;width:1px;height:14.199999999999989px;background:#dcdcdc"></div>
<div class="r" style="left:613.66px;top:131.2px;width:1px;height:396.8px;background:#ececec"></div>
<div class="r" style="left:613.66px;top:117px;width:1px;height:14.199999999999989px;background:#dcdcdc"></div>
<div class="r" style="left:653.48px;top:131.2px;width:1px;height:396.8px;background:#ececec"></div>
<div class="r" style="left:653.48px;top:117px;width:1px;height:14.199999999999989px;background:#dcdcdc"></div>
<div class="r" style="left:693.30px;top:131.2px;width:1px;height:396.8px;background:#ececec"></div>
<div class="r" style="left:693.30px;top:117px;width:1px;height:14.199999999999989px;background:#dcdcdc"></div>
<div class="r" style="left:733.12px;top:131.2px;width:1px;height:396.8px;background:#ececec"></div>
<div class="r" style="left:733.12px;top:117px;width:1px;height:14.199999999999989px;background:#dcdcdc"></div>
<div class="r" style="left:772.94px;top:131.2px;width:1px;height:396.8px;background:#ececec"></div>
<div class="r" style="left:772.94px;top:117px;width:1px;height:14.199999999999989px;background:#dcdcdc"></div>
<div class="r" style="left:812.76px;top:131.2px;width:1px;height:396.8px;background:#ececec"></div>
<div class="r" style="left:812.76px;top:117px;width:1px;height:14.199999999999989px;background:#dcdcdc"></div>
<div class="r" style="left:852.58px;top:131.2px;width:1px;height:396.8px;background:#ececec"></div>
<div class="r" style="left:852.58px;top:117px;width:1px;height:14.199999999999989px;background:#dcdcdc"></div>
<div class="r" style="left:892.40px;top:131.2px;width:1px;height:396.8px;background:#ececec"></div>
<div class="r" style="left:892.40px;top:117px;width:1px;height:14.199999999999989px;background:#dcdcdc"></div>
<div class="r" style="left:96.5px;top:130.70px;width:835.5px;height:1px;background:#ececec"></div>
<div class="r" style="left:81.3px;top:130.70px;width:15.2px;height:1px;background:#dcdcdc"></div>
<div class="r" style="left:96.5px;top:144.49px;width:835.5px;height:1px;background:#ececec"></div>
<div class="r" style="left:81.3px;top:144.49px;width:15.2px;height:1px;background:#dcdcdc"></div>
<div class="r" style="left:96.5px;top:158.28px;width:835.5px;height:1px;background:#ececec"></div>
<div class="r" style="left:81.3px;top:158.28px;width:15.2px;height:1px;background:#dcdcdc"></div>
<div class="r" style="left:96.5px;top:172.07px;width:835.5px;height:1px;background:#ececec"></div>
<div class="r" style="left:81.3px;top:172.07px;width:15.2px;height:1px;background:#dcdcdc"></div>
<div class="r" style="left:96.5px;top:185.86px;width:835.5px;height:1px;background:#ececec"></div>
<div class="r" style="left:81.3px;top:185.86px;width:15.2px;height:1px;background:#dcdcdc"></div>
<div class="r" style="left:96.5px;top:199.65px;width:835.5px;height:1px;background:#ececec"></div>
<div class="r" style="left:81.3px;top:199.65px;width:15.2px;height:1px;background:#dcdcdc"></div>
<div class="r" style="left:96.5px;top:213.44px;width:835.5px;height:1px;background:#ececec"></div>
<div class="r" style="left:81.3px;top:213.44px;width:15.2px;height:1px;background:#dcdcdc"></div>
<div class="r" style="left:96.5px;top:227.23px;width:835.5px;height:1px;background:#ececec"></div>
<div class="r" style="left:81.3px;top:227.23px;width:15.2px;height:1px;background:#dcdcdc"></div>
<div class="r" style="left:96.5px;top:241.02px;width:835.5px;height:1px;background:#ececec"></div>
<div class="r" style="left:81.3px;top:241.02px;width:15.2px;height:1px;background:#dcdcdc"></div>
<div class="r" style="left:96.5px;top:254.81px;width:835.5px;height:1px;background:#ececec"></div>
<div class="r" style="left:81.3px;top:254.81px;width:15.2px;height:1px;background:#dcdcdc"></div>
<div class="r" style="left:96.5px;top:268.60px;width:835.5px;height:1px;background:#ececec"></div>
<div class="r" style="left:81.3px;top:268.60px;width:15.2px;height:1px;background:#dcdcdc"></div>
<div class="r" style="left:96.5px;top:282.39px;width:835.5px;height:1px;background:#ececec"></div>
<div class="r" style="left:81.3px;top:282.39px;width:15.2px;height:1px;background:#dcdcdc"></div>
<div class="r" style="left:96.5px;top:296.18px;width:835.5px;height:1px;background:#ececec"></div>
<div class="r" style="left:81.3px;top:296.18px;width:15.2px;height:1px;background:#dcdcdc"></div>
<div class="r" style="left:96.5px;top:309.97px;width:835.5px;height:1px;background:#ececec"></div>
<div class="r" style="left:81.3px;top:309.97px;width:15.2px;height:1px;background:#dcdcdc"></div>
<div class="r" style="left:96.5px;top:323.76px;width:835.5px;height:1px;background:#ececec"></div>
<div class="r" style="left:81.3px;top:323.76px;width:15.2px;height:1px;background:#dcdcdc"></div>
<div class="r" style="left:96.5px;top:337.55px;width:835.5px;height:1px;background:#ececec"></div>
<div class="r" style="left:81.3px;top:337.55px;width:15.2px;height:1px;background:#dcdcdc"></div>
<div class="r" style="left:96.5px;top:351.34px;width:835.5px;height:1px;background:#ececec"></div>
<div class="r" style="left:81.3px;top:351.34px;width:15.2px;height:1px;background:#dcdcdc"></div>
<div class="r" style="left:96.5px;top:365.13px;width:835.5px;height:1px;background:#ececec"></div>
<div class="r" style="left:81.3px;top:365.13px;width:15.2px;height:1px;background:#dcdcdc"></div>
<div class="r" style="left:96.5px;top:378.92px;width:835.5px;height:1px;background:#ececec"></div>
<div class="r" style="left:81.3px;top:378.92px;width:15.2px;height:1px;background:#dcdcdc"></div>
<div class="r" style="left:96.5px;top:392.71px;width:835.5px;height:1px;background:#ececec"></div>
<div class="r" style="left:81.3px;top:392.71px;width:15.2px;height:1px;background:#dcdcdc"></div>
<div class="r" style="left:96.5px;top:406.50px;width:835.5px;height:1px;background:#ececec"></div>
<div class="r" style="left:81.3px;top:406.50px;width:15.2px;height:1px;background:#dcdcdc"></div>
<div class="r" style="left:96.5px;top:420.29px;width:835.5px;height:1px;background:#ececec"></div>
<div class="r" style="left:81.3px;top:420.29px;width:15.2px;height:1px;background:#dcdcdc"></div>
<div class="r" style="left:96.5px;top:434.08px;width:835.5px;height:1px;background:#ececec"></div>
<div class="r" style="left:81.3px;top:434.08px;width:15.2px;height:1px;background:#dcdcdc"></div>
<div class="r" style="left:96.5px;top:447.87px;width:835.5px;height:1px;background:#ececec"></div>
<div class="r" style="left:81.3px;top:447.87px;width:15.2px;height:1px;background:#dcdcdc"></div>
<div class="r" style="left:96.5px;top:461.66px;width:835.5px;height:1px;background:#ececec"></div>
<div class="r" style="left:81.3px;top:461.66px;width:15.2px;height:1px;background:#dcdcdc"></div>
<div class="r" style="left:96.5px;top:475.45px;width:835.5px;height:1px;background:#ececec"></div>
<div class="r" style="left:81.3px;top:475.45px;width:15.2px;height:1px;background:#dcdcdc"></div>
<div class="r" style="left:96.5px;top:489.24px;width:835.5px;height:1px;background:#ececec"></div>
<div class="r" style="left:81.3px;top:489.24px;width:15.2px;height:1px;background:#dcdcdc"></div>
<div class="r" style="left:96.5px;top:503.03px;width:835.5px;height:1px;background:#ececec"></div>
<div class="r" style="left:81.3px;top:503.03px;width:15.2px;height:1px;background:#dcdcdc"></div>
<div class="r" style="left:96.5px;top:516.82px;width:835.5px;height:1px;background:#ececec"></div>
<div class="r" style="left:81.3px;top:516.82px;width:15.2px;height:1px;background:#dcdcdc"></div>
<span class="t" style="left:116.41px;top:123.9px;color:#4a4a4a;transform:translate(-50%,-50%) scaleX(0.9);transform-origin:50% 50%;font-size:9.4px;">A</span>
<span class="t" style="left:156.23px;top:123.9px;color:#4a4a4a;transform:translate(-50%,-50%) scaleX(0.9);transform-origin:50% 50%;font-size:9.4px;">B</span>
<span class="t" style="left:196.04999999999998px;top:123.9px;color:#4a4a4a;transform:translate(-50%,-50%) scaleX(0.9);transform-origin:50% 50%;font-size:9.4px;">C</span>
<span class="t" style="left:235.87px;top:123.9px;color:#4a4a4a;transform:translate(-50%,-50%) scaleX(0.9);transform-origin:50% 50%;font-size:9.4px;">D</span>
<span class="t" style="left:275.69px;top:123.9px;color:#4a4a4a;transform:translate(-50%,-50%) scaleX(0.9);transform-origin:50% 50%;font-size:9.4px;">E</span>
<span class="t" style="left:315.51000000000005px;top:123.9px;color:#1f6b45;transform:translate(-50%,-50%) scaleX(0.9);transform-origin:50% 50%;font-size:9.4px;">F</span>
<span class="t" style="left:355.33000000000004px;top:123.9px;color:#4a4a4a;transform:translate(-50%,-50%) scaleX(0.9);transform-origin:50% 50%;font-size:9.4px;">G</span>
<span class="t" style="left:395.15000000000003px;top:123.9px;color:#4a4a4a;transform:translate(-50%,-50%) scaleX(0.9);transform-origin:50% 50%;font-size:9.4px;">H</span>
<span class="t" style="left:434.97px;top:123.9px;color:#4a4a4a;transform:translate(-50%,-50%) scaleX(0.9);transform-origin:50% 50%;font-size:9.4px;">I</span>
<span class="t" style="left:474.79px;top:123.9px;color:#4a4a4a;transform:translate(-50%,-50%) scaleX(0.9);transform-origin:50% 50%;font-size:9.4px;">J</span>
<span class="t" style="left:514.61px;top:123.9px;color:#4a4a4a;transform:translate(-50%,-50%) scaleX(0.9);transform-origin:50% 50%;font-size:9.4px;">K</span>
<span class="t" style="left:554.43px;top:123.9px;color:#4a4a4a;transform:translate(-50%,-50%) scaleX(0.9);transform-origin:50% 50%;font-size:9.4px;">L</span>
<span class="t" style="left:594.25px;top:123.9px;color:#4a4a4a;transform:translate(-50%,-50%) scaleX(0.9);transform-origin:50% 50%;font-size:9.4px;">M</span>
<span class="t" style="left:634.0699999999999px;top:123.9px;color:#4a4a4a;transform:translate(-50%,-50%) scaleX(0.9);transform-origin:50% 50%;font-size:9.4px;">N</span>
<span class="t" style="left:673.89px;top:123.9px;color:#4a4a4a;transform:translate(-50%,-50%) scaleX(0.9);transform-origin:50% 50%;font-size:9.4px;">O</span>
<span class="t" style="left:713.7099999999999px;top:123.9px;color:#4a4a4a;transform:translate(-50%,-50%) scaleX(0.9);transform-origin:50% 50%;font-size:9.4px;">P</span>
<span class="t" style="left:753.53px;top:123.9px;color:#4a4a4a;transform:translate(-50%,-50%) scaleX(0.9);transform-origin:50% 50%;font-size:9.4px;">Q</span>
<span class="t" style="left:793.35px;top:123.9px;color:#4a4a4a;transform:translate(-50%,-50%) scaleX(0.9);transform-origin:50% 50%;font-size:9.4px;">R</span>
<span class="t" style="left:833.17px;top:123.9px;color:#4a4a4a;transform:translate(-50%,-50%) scaleX(0.9);transform-origin:50% 50%;font-size:9.4px;">S</span>
<span class="t" style="left:872.99px;top:123.9px;color:#4a4a4a;transform:translate(-50%,-50%) scaleX(0.9);transform-origin:50% 50%;font-size:9.4px;">T</span>
<span class="t" style="left:912.81px;top:123.9px;color:#4a4a4a;transform:translate(-50%,-50%) scaleX(0.9);transform-origin:50% 50%;font-size:9.4px;">U</span>
<span class="t" style="left:88.6px;top:138.795px;color:#4a4a4a;transform:translate(-50%,-50%) scaleX(0.9);transform-origin:50% 50%;font-size:9.2px;">1</span>
<span class="t" style="left:88.6px;top:152.58499999999998px;color:#4a4a4a;transform:translate(-50%,-50%) scaleX(0.9);transform-origin:50% 50%;font-size:9.2px;">2</span>
<span class="t" style="left:88.6px;top:166.37499999999997px;color:#4a4a4a;transform:translate(-50%,-50%) scaleX(0.9);transform-origin:50% 50%;font-size:9.2px;">3</span>
<span class="t" style="left:88.6px;top:180.165px;color:#4a4a4a;transform:translate(-50%,-50%) scaleX(0.9);transform-origin:50% 50%;font-size:9.2px;">4</span>
<span class="t" style="left:88.6px;top:193.95499999999998px;color:#4a4a4a;transform:translate(-50%,-50%) scaleX(0.9);transform-origin:50% 50%;font-size:9.2px;">5</span>
<span class="t" style="left:88.6px;top:207.74499999999998px;color:#4a4a4a;transform:translate(-50%,-50%) scaleX(0.9);transform-origin:50% 50%;font-size:9.2px;">6</span>
<span class="t" style="left:88.6px;top:221.535px;color:#4a4a4a;transform:translate(-50%,-50%) scaleX(0.9);transform-origin:50% 50%;font-size:9.2px;">7</span>
<span class="t" style="left:88.6px;top:235.325px;color:#4a4a4a;transform:translate(-50%,-50%) scaleX(0.9);transform-origin:50% 50%;font-size:9.2px;">8</span>
<span class="t" style="left:88.6px;top:249.11499999999998px;color:#4a4a4a;transform:translate(-50%,-50%) scaleX(0.9);transform-origin:50% 50%;font-size:9.2px;">9</span>
<span class="t" style="left:88.6px;top:262.905px;color:#4a4a4a;transform:translate(-50%,-50%) scaleX(0.9);transform-origin:50% 50%;font-size:9.2px;">10</span>
<span class="t" style="left:88.6px;top:276.69499999999994px;color:#4a4a4a;transform:translate(-50%,-50%) scaleX(0.9);transform-origin:50% 50%;font-size:9.2px;">11</span>
<span class="t" style="left:88.6px;top:290.48499999999996px;color:#4a4a4a;transform:translate(-50%,-50%) scaleX(0.9);transform-origin:50% 50%;font-size:9.2px;">12</span>
<span class="t" style="left:88.6px;top:304.2749999999999px;color:#4a4a4a;transform:translate(-50%,-50%) scaleX(0.9);transform-origin:50% 50%;font-size:9.2px;">13</span>
<span class="t" style="left:88.6px;top:318.06499999999994px;color:#1f6b45;transform:translate(-50%,-50%) scaleX(0.9);transform-origin:50% 50%;font-size:9.2px;">14</span>
<span class="t" style="left:88.6px;top:331.85499999999996px;color:#4a4a4a;transform:translate(-50%,-50%) scaleX(0.9);transform-origin:50% 50%;font-size:9.2px;">15</span>
<span class="t" style="left:88.6px;top:345.6449999999999px;color:#4a4a4a;transform:translate(-50%,-50%) scaleX(0.9);transform-origin:50% 50%;font-size:9.2px;">16</span>
<span class="t" style="left:88.6px;top:359.43499999999995px;color:#4a4a4a;transform:translate(-50%,-50%) scaleX(0.9);transform-origin:50% 50%;font-size:9.2px;">17</span>
<span class="t" style="left:88.6px;top:373.22499999999997px;color:#4a4a4a;transform:translate(-50%,-50%) scaleX(0.9);transform-origin:50% 50%;font-size:9.2px;">18</span>
<span class="t" style="left:88.6px;top:387.01499999999993px;color:#4a4a4a;transform:translate(-50%,-50%) scaleX(0.9);transform-origin:50% 50%;font-size:9.2px;">19</span>
<span class="t" style="left:88.6px;top:400.80499999999995px;color:#4a4a4a;transform:translate(-50%,-50%) scaleX(0.9);transform-origin:50% 50%;font-size:9.2px;">20</span>
<span class="t" style="left:88.6px;top:414.5949999999999px;color:#4a4a4a;transform:translate(-50%,-50%) scaleX(0.9);transform-origin:50% 50%;font-size:9.2px;">21</span>
<span class="t" style="left:88.6px;top:428.38499999999993px;color:#4a4a4a;transform:translate(-50%,-50%) scaleX(0.9);transform-origin:50% 50%;font-size:9.2px;">22</span>
<span class="t" style="left:88.6px;top:442.17499999999995px;color:#4a4a4a;transform:translate(-50%,-50%) scaleX(0.9);transform-origin:50% 50%;font-size:9.2px;">23</span>
<span class="t" style="left:88.6px;top:455.9649999999999px;color:#4a4a4a;transform:translate(-50%,-50%) scaleX(0.9);transform-origin:50% 50%;font-size:9.2px;">24</span>
<span class="t" style="left:88.6px;top:469.75499999999994px;color:#4a4a4a;transform:translate(-50%,-50%) scaleX(0.9);transform-origin:50% 50%;font-size:9.2px;">25</span>
<span class="t" style="left:88.6px;top:483.54499999999996px;color:#4a4a4a;transform:translate(-50%,-50%) scaleX(0.9);transform-origin:50% 50%;font-size:9.2px;">26</span>
<span class="t" style="left:88.6px;top:497.3349999999999px;color:#4a4a4a;transform:translate(-50%,-50%) scaleX(0.9);transform-origin:50% 50%;font-size:9.2px;">27</span>
<span class="t" style="left:88.6px;top:511.12499999999994px;color:#4a4a4a;transform:translate(-50%,-50%) scaleX(0.9);transform-origin:50% 50%;font-size:9.2px;">28</span>
<span class="t" style="left:88.6px;top:524.915px;color:#4a4a4a;transform:translate(-50%,-50%) scaleX(0.9);transform-origin:50% 50%;font-size:9.2px;">29</span>
<div class="r" style="left:96.5px;top:131.2px;width:39.82px;height:13.79px;background:#d9e1f2;"></div>
<div class="r" style="left:136.32px;top:131.2px;width:39.82px;height:13.79px;background:#d9e1f2;"></div>
<div class="r" style="left:176.14px;top:131.2px;width:39.82px;height:13.79px;background:#d9e1f2;"></div>
<div class="r" style="left:215.96px;top:131.2px;width:39.82px;height:13.79px;background:#d9e1f2;"></div>
<div class="r" style="left:255.78px;top:131.2px;width:39.82px;height:13.79px;background:#d9e1f2;"></div>
<div class="r" style="left:96.0px;top:130.7px;width:40.82px;height:14.79px;border:1px solid #7a7a7a;"></div>
<div class="r" style="left:135.82px;top:130.7px;width:40.82px;height:14.79px;border:1px solid #7a7a7a;"></div>
<div class="r" style="left:175.64px;top:130.7px;width:40.82px;height:14.79px;border:1px solid #7a7a7a;"></div>
<div class="r" style="left:215.46px;top:130.7px;width:40.82px;height:14.79px;border:1px solid #7a7a7a;"></div>
<div class="r" style="left:255.28px;top:130.7px;width:40.82px;height:14.79px;border:1px solid #7a7a7a;"></div>
<div class="r" style="left:96.0px;top:144.49px;width:40.82px;height:14.79px;border:1px solid #7a7a7a;"></div>
<div class="r" style="left:135.82px;top:144.49px;width:40.82px;height:14.79px;border:1px solid #7a7a7a;"></div>
<div class="r" style="left:175.64px;top:144.49px;width:40.82px;height:14.79px;border:1px solid #7a7a7a;"></div>
<div class="r" style="left:215.46px;top:144.49px;width:40.82px;height:14.79px;border:1px solid #7a7a7a;"></div>
<div class="r" style="left:255.28px;top:144.49px;width:40.82px;height:14.79px;border:1px solid #7a7a7a;"></div>
<div class="r" style="left:96.0px;top:158.28px;width:40.82px;height:14.79px;border:1px solid #7a7a7a;"></div>
<div class="r" style="left:135.82px;top:158.28px;width:40.82px;height:14.79px;border:1px solid #7a7a7a;"></div>
<div class="r" style="left:175.64px;top:158.28px;width:40.82px;height:14.79px;border:1px solid #7a7a7a;"></div>
<div class="r" style="left:215.46px;top:158.28px;width:40.82px;height:14.79px;border:1px solid #7a7a7a;"></div>
<div class="r" style="left:255.28px;top:158.28px;width:40.82px;height:14.79px;border:1px solid #7a7a7a;"></div>
<div class="r" style="left:96.0px;top:172.07px;width:40.82px;height:14.79px;border:1px solid #7a7a7a;"></div>
<div class="r" style="left:135.82px;top:172.07px;width:40.82px;height:14.79px;border:1px solid #7a7a7a;"></div>
<div class="r" style="left:175.64px;top:172.07px;width:40.82px;height:14.79px;border:1px solid #7a7a7a;"></div>
<div class="r" style="left:215.46px;top:172.07px;width:40.82px;height:14.79px;border:1px solid #7a7a7a;"></div>
<div class="r" style="left:255.28px;top:172.07px;width:40.82px;height:14.79px;border:1px solid #7a7a7a;"></div>
<span class="t" style="left:98.1px;top:137.79px;color:#4d4d4d;transform:translate(0,-50%);transform-origin:0 50%;font-size:8.5px;font-weight:350;">名前</span>
<span class="t" style="left:137.92px;top:137.79px;color:#4d4d4d;transform:translate(0,-50%);transform-origin:0 50%;font-size:8.5px;font-weight:350;">国語</span>
<span class="t" style="left:177.74px;top:137.79px;color:#4d4d4d;transform:translate(0,-50%);transform-origin:0 50%;font-size:8.5px;font-weight:350;">英語</span>
<span class="t" style="left:217.56px;top:137.79px;color:#4d4d4d;transform:translate(0,-50%);transform-origin:0 50%;font-size:8.5px;font-weight:350;">数学</span>
<span class="t" style="left:257.38px;top:137.79px;color:#4d4d4d;transform:translate(0,-50%);transform-origin:0 50%;font-size:8.5px;font-weight:350;">合計</span>
<span class="t" style="left:98.1px;top:151.58px;color:#4d4d4d;transform:translate(0,-50%);transform-origin:0 50%;font-size:8.5px;font-weight:350;">佐藤</span>
<span class="t" style="left:174.14px;top:152.78px;color:#525252;transform:translate(-100%,-50%) scaleX(0.87);transform-origin:100% 50%;font-size:9.3px;">90</span>
<span class="t" style="left:213.96px;top:152.78px;color:#525252;transform:translate(-100%,-50%) scaleX(0.87);transform-origin:100% 50%;font-size:9.3px;">60</span>
<span class="t" style="left:253.78px;top:152.78px;color:#525252;transform:translate(-100%,-50%) scaleX(0.87);transform-origin:100% 50%;font-size:9.3px;">70</span>
<span class="t" style="left:293.6px;top:152.78px;color:#525252;transform:translate(-100%,-50%) scaleX(0.87);transform-origin:100% 50%;font-size:9.3px;">220</span>
<span class="t" style="left:98.1px;top:165.37px;color:#4d4d4d;transform:translate(0,-50%);transform-origin:0 50%;font-size:8.5px;font-weight:350;">鈴木</span>
<span class="t" style="left:174.14px;top:166.57px;color:#525252;transform:translate(-100%,-50%) scaleX(0.87);transform-origin:100% 50%;font-size:9.3px;">50</span>
<span class="t" style="left:213.96px;top:166.57px;color:#525252;transform:translate(-100%,-50%) scaleX(0.87);transform-origin:100% 50%;font-size:9.3px;">80</span>
<span class="t" style="left:253.78px;top:166.57px;color:#525252;transform:translate(-100%,-50%) scaleX(0.87);transform-origin:100% 50%;font-size:9.3px;">30</span>
<span class="t" style="left:293.6px;top:166.57px;color:#525252;transform:translate(-100%,-50%) scaleX(0.87);transform-origin:100% 50%;font-size:9.3px;">160</span>
<span class="t" style="left:98.1px;top:179.16px;color:#4d4d4d;transform:translate(0,-50%);transform-origin:0 50%;font-size:8.5px;font-weight:350;">山田</span>
<span class="t" style="left:174.14px;top:180.37px;color:#525252;transform:translate(-100%,-50%) scaleX(0.87);transform-origin:100% 50%;font-size:9.3px;">50</span>
<span class="t" style="left:213.96px;top:180.37px;color:#525252;transform:translate(-100%,-50%) scaleX(0.87);transform-origin:100% 50%;font-size:9.3px;">40</span>
<span class="t" style="left:253.78px;top:180.37px;color:#525252;transform:translate(-100%,-50%) scaleX(0.87);transform-origin:100% 50%;font-size:9.3px;">80</span>
<span class="t" style="left:293.6px;top:180.37px;color:#525252;transform:translate(-100%,-50%) scaleX(0.87);transform-origin:100% 50%;font-size:9.3px;">170</span>
<div class="r" style="left:96.5px;top:213.94px;width:39.82px;height:13.79px;background:#d9e1f2;"></div>
<div class="r" style="left:136.32px;top:213.94px;width:39.82px;height:13.79px;background:#d9e1f2;"></div>
<div class="r" style="left:176.14px;top:213.94px;width:39.82px;height:13.79px;background:#d9e1f2;"></div>
<div class="r" style="left:215.96px;top:213.94px;width:39.82px;height:13.79px;background:#d9e1f2;"></div>
<div class="r" style="left:96.0px;top:213.44px;width:40.82px;height:14.79px;border:1px solid #7a7a7a;"></div>
<div class="r" style="left:135.82px;top:213.44px;width:40.82px;height:14.79px;border:1px solid #7a7a7a;"></div>
<div class="r" style="left:175.64px;top:213.44px;width:40.82px;height:14.79px;border:1px solid #7a7a7a;"></div>
<div class="r" style="left:215.46px;top:213.44px;width:40.82px;height:14.79px;border:1px solid #7a7a7a;"></div>
<div class="r" style="left:96.0px;top:227.23px;width:40.82px;height:14.79px;border:1px solid #7a7a7a;"></div>
<div class="r" style="left:135.82px;top:227.23px;width:40.82px;height:14.79px;border:1px solid #7a7a7a;"></div>
<div class="r" style="left:175.64px;top:227.23px;width:40.82px;height:14.79px;border:1px solid #7a7a7a;"></div>
<div class="r" style="left:215.46px;top:227.23px;width:40.82px;height:14.79px;border:1px solid #7a7a7a;"></div>
<div class="r" style="left:96.0px;top:241.02px;width:40.82px;height:14.79px;border:1px solid #7a7a7a;"></div>
<div class="r" style="left:135.82px;top:241.02px;width:40.82px;height:14.79px;border:1px solid #7a7a7a;"></div>
<div class="r" style="left:175.64px;top:241.02px;width:40.82px;height:14.79px;border:1px solid #7a7a7a;"></div>
<div class="r" style="left:215.46px;top:241.02px;width:40.82px;height:14.79px;border:1px solid #7a7a7a;"></div>
<div class="r" style="left:96.0px;top:254.81px;width:40.82px;height:14.79px;border:1px solid #7a7a7a;"></div>
<div class="r" style="left:135.82px;top:254.81px;width:40.82px;height:14.79px;border:1px solid #7a7a7a;"></div>
<div class="r" style="left:175.64px;top:254.81px;width:40.82px;height:14.79px;border:1px solid #7a7a7a;"></div>
<div class="r" style="left:215.46px;top:254.81px;width:40.82px;height:14.79px;border:1px solid #7a7a7a;"></div>
<span class="t" style="left:98.1px;top:220.53px;color:#4d4d4d;transform:translate(0,-50%);transform-origin:0 50%;font-size:8.5px;font-weight:350;">名前</span>
<span class="t" style="left:137.92px;top:220.53px;color:#4d4d4d;transform:translate(0,-50%);transform-origin:0 50%;font-size:8.5px;font-weight:350;">平均</span>
<span class="t" style="left:177.74px;top:220.53px;color:#4d4d4d;transform:translate(0,-50%);transform-origin:0 50%;font-size:8.5px;font-weight:350;">最大</span>
<span class="t" style="left:217.56px;top:220.53px;color:#4d4d4d;transform:translate(0,-50%);transform-origin:0 50%;font-size:8.5px;font-weight:350;">最小</span>
<span class="t" style="left:98.1px;top:234.32px;color:#4d4d4d;transform:translate(0,-50%);transform-origin:0 50%;font-size:8.5px;font-weight:350;">佐藤</span>
<span class="t" style="left:174.14px;top:235.53px;color:#525252;transform:translate(-100%,-50%) scaleX(0.87);transform-origin:100% 50%;font-size:9.3px;">73.33333</span>
<span class="t" style="left:213.96px;top:235.53px;color:#525252;transform:translate(-100%,-50%) scaleX(0.87);transform-origin:100% 50%;font-size:9.3px;">90</span>
<span class="t" style="left:253.78px;top:235.53px;color:#525252;transform:translate(-100%,-50%) scaleX(0.87);transform-origin:100% 50%;font-size:9.3px;">60</span>
<span class="t" style="left:98.1px;top:248.11px;color:#4d4d4d;transform:translate(0,-50%);transform-origin:0 50%;font-size:8.5px;font-weight:350;">鈴木</span>
<span class="t" style="left:174.14px;top:249.31px;color:#525252;transform:translate(-100%,-50%) scaleX(0.87);transform-origin:100% 50%;font-size:9.3px;">53.33333</span>
<span class="t" style="left:213.96px;top:249.31px;color:#525252;transform:translate(-100%,-50%) scaleX(0.87);transform-origin:100% 50%;font-size:9.3px;">80</span>
<span class="t" style="left:253.78px;top:249.31px;color:#525252;transform:translate(-100%,-50%) scaleX(0.87);transform-origin:100% 50%;font-size:9.3px;">30</span>
<span class="t" style="left:98.1px;top:261.9px;color:#4d4d4d;transform:translate(0,-50%);transform-origin:0 50%;font-size:8.5px;font-weight:350;">山田</span>
<span class="t" style="left:174.14px;top:263.1px;color:#525252;transform:translate(-100%,-50%) scaleX(0.87);transform-origin:100% 50%;font-size:9.3px;">56.66667</span>
<span class="t" style="left:213.96px;top:263.1px;color:#525252;transform:translate(-100%,-50%) scaleX(0.87);transform-origin:100% 50%;font-size:9.3px;">80</span>
<span class="t" style="left:253.78px;top:263.1px;color:#525252;transform:translate(-100%,-50%) scaleX(0.87);transform-origin:100% 50%;font-size:9.3px;">40</span>
<div class="r" style="left:136.32px;top:296.68px;width:39.82px;height:13.79px;background:#d9e1f2;"></div>
<div class="r" style="left:96.0px;top:296.18px;width:40.82px;height:14.79px;border:1px solid #7a7a7a;"></div>
<div class="r" style="left:135.82px;top:296.18px;width:40.82px;height:14.79px;border:1px solid #7a7a7a;"></div>
<div class="r" style="left:96.0px;top:309.97px;width:40.82px;height:14.79px;border:1px solid #7a7a7a;"></div>
<div class="r" style="left:135.82px;top:309.97px;width:40.82px;height:14.79px;border:1px solid #7a7a7a;"></div>
<div class="r" style="left:96.0px;top:323.76px;width:40.82px;height:14.79px;border:1px solid #7a7a7a;"></div>
<div class="r" style="left:135.82px;top:323.76px;width:40.82px;height:14.79px;border:1px solid #7a7a7a;"></div>
<div class="r" style="left:96.0px;top:337.55px;width:40.82px;height:14.79px;border:1px solid #7a7a7a;"></div>
<div class="r" style="left:135.82px;top:337.55px;width:40.82px;height:14.79px;border:1px solid #7a7a7a;"></div>
<span class="t" style="left:137.92px;top:303.27px;color:#4d4d4d;transform:translate(0,-50%);transform-origin:0 50%;font-size:8.5px;font-weight:350;">出席人数</span>
<span class="t" style="left:98.1px;top:317.06px;color:#4d4d4d;transform:translate(0,-50%);transform-origin:0 50%;font-size:8.5px;font-weight:350;">国語</span>
<span class="t" style="left:174.14px;top:318.26px;color:#525252;transform:translate(-100%,-50%) scaleX(0.87);transform-origin:100% 50%;font-size:9.3px;">3</span>
<span class="t" style="left:98.1px;top:330.85px;color:#4d4d4d;transform:translate(0,-50%);transform-origin:0 50%;font-size:8.5px;font-weight:350;">英語</span>
<span class="t" style="left:174.14px;top:332.05px;color:#525252;transform:translate(-100%,-50%) scaleX(0.87);transform-origin:100% 50%;font-size:9.3px;">3</span>
<span class="t" style="left:98.1px;top:344.64px;color:#4d4d4d;transform:translate(0,-50%);transform-origin:0 50%;font-size:8.5px;font-weight:350;">数学</span>
<span class="t" style="left:174.14px;top:345.84px;color:#525252;transform:translate(-100%,-50%) scaleX(0.87);transform-origin:100% 50%;font-size:9.3px;">3</span>
<svg class="r" style="left:96.5px;top:296.68px;" width="39.82" height="13.79" viewBox="0 0 39.82 13.79"><path d="M0 0 L39.82 13.79" stroke="#7a7a7a" stroke-width="0.8"/></svg>
<div class="r" style="left:215.96px;top:296.68px;width:39.82px;height:13.79px;background:#d9e1f2;"></div>
<div class="r" style="left:255.78px;top:296.68px;width:39.82px;height:13.79px;background:#d9e1f2;"></div>
<div class="r" style="left:215.46px;top:296.18px;width:40.82px;height:14.79px;border:1px solid #7a7a7a;"></div>
<div class="r" style="left:255.28px;top:296.18px;width:40.82px;height:14.79px;border:1px solid #7a7a7a;"></div>
<div class="r" style="left:215.46px;top:309.97px;width:40.82px;height:14.79px;border:1px solid #7a7a7a;"></div>
<div class="r" style="left:255.28px;top:309.97px;width:40.82px;height:14.79px;border:1px solid #7a7a7a;"></div>
<div class="r" style="left:215.46px;top:323.76px;width:40.82px;height:14.79px;border:1px solid #7a7a7a;"></div>
<div class="r" style="left:255.28px;top:323.76px;width:40.82px;height:14.79px;border:1px solid #7a7a7a;"></div>
<div class="r" style="left:215.46px;top:337.55px;width:40.82px;height:14.79px;border:1px solid #7a7a7a;"></div>
<div class="r" style="left:255.28px;top:337.55px;width:40.82px;height:14.79px;border:1px solid #7a7a7a;"></div>
<span class="t" style="left:217.56px;top:303.27px;color:#4d4d4d;transform:translate(0,-50%);transform-origin:0 50%;font-size:8.5px;font-weight:350;">合格者</span>
<span class="t" style="left:257.38px;top:303.27px;color:#4d4d4d;transform:translate(0,-50%);transform-origin:0 50%;font-size:8.5px;font-weight:350;">国語</span>
<span class="t" style="left:217.56px;top:317.06px;color:#4d4d4d;transform:translate(0,-50%);transform-origin:0 50%;font-size:8.5px;font-weight:350;">佐藤</span>
<span class="t" style="left:257.38px;top:317.06px;color:#4d4d4d;transform:translate(0,-50%);transform-origin:0 50%;font-size:8.5px;font-weight:350;">合格</span>
<span class="t" style="left:217.56px;top:330.85px;color:#4d4d4d;transform:translate(0,-50%);transform-origin:0 50%;font-size:8.5px;font-weight:350;">鈴木</span>
<span class="t" style="left:257.38px;top:330.85px;color:#4d4d4d;transform:translate(0,-50%);transform-origin:0 50%;font-size:8.5px;font-weight:350;">不合格</span>
<span class="t" style="left:217.56px;top:344.64px;color:#4d4d4d;transform:translate(0,-50%);transform-origin:0 50%;font-size:8.5px;font-weight:350;">山田</span>
<span class="t" style="left:257.38px;top:344.64px;color:#4d4d4d;transform:translate(0,-50%);transform-origin:0 50%;font-size:8.5px;font-weight:350;">不合格</span>
<div class="r" style="left:932px;top:115.5px;width:12px;height:413.0px;background:#e6e6e6;"></div>
<div class="r" style="left:933.4px;top:127.4px;width:9.2px;height:392.4px;background:#dadada;"></div>
<div class="r" style="left:933.4px;top:118px;width:9.2px;height:9.2px;background:#fff;border:1px solid #d9d9d9;"></div>
<div class="r" style="left:933.4px;top:127.6px;width:9.2px;height:377.4px;background:#fff;border:1px solid #d2d2d2;"></div>
<div class="r" style="left:933.4px;top:519.7px;width:9.2px;height:9.2px;background:#fff;border:1px solid #d9d9d9;"></div>
<span class="t" style="left:938px;top:122.9px;color:#666;transform:translate(-50%,-50%) scaleX(1.25);transform-origin:50% 50%;font-size:4.4px;">▲</span>
<span class="t" style="left:938.2px;top:524.4px;color:#666;transform:translate(-50%,-50%) scaleX(1.25);transform-origin:50% 50%;font-size:4.4px;">▼</span>
<div class="r" style="left:267.2px;top:225.6px;width:363.00000000000006px;height:194.9px;box-shadow:0 1.5px 6px 1px rgba(0,0,0,.25);"></div>
<div class="r" style="left:268.2px;top:225.6px;width:361.00000000000006px;height:192.9px;background:#f0f0f0;border:1px solid #bcbcbc;"></div>
<div class="r" style="left:269.0px;top:226.4px;width:359.40000000000003px;height:16.4px;background:#fff;"></div>
<span class="t" style="left:273px;top:234.4px;color:#555;transform:translate(0,-50%) scaleX(0.904);transform-origin:0 50%;font-size:7.3px;">関数の引数</span>
<span class="t" style="left:589.6px;top:234.2px;color:#555;transform:translate(-50%,-50%);transform-origin:50% 50%;font-size:8px;">?</span>
<svg class="r" style="left:612.6px;top:230.6px;" width="7" height="7" viewBox="0 0 7 7"><path d="M0.6 0.6 L6.4 6.4 M6.4 0.6 L0.6 6.4" stroke="#555" stroke-width="0.8"/></svg>
<div class="r" style="left:273px;top:252px;width:352.6px;height:57px;border:1px solid #dcdcdc;"></div>
<div class="r" style="left:275.4px;top:248.6px;width:9.4px;height:7px;background:#f0f0f0;"></div>
<span class="t" style="left:276.8px;top:252.4px;color:#333;transform:translate(0,-50%);transform-origin:0 50%;font-size:8.2px;font-family:'Liberation Serif',serif;">IF</span>
<div class="r" style="left:350.1px;top:260.2px;width:114.4px;height:13.4px;background:#fff;border:1px solid #b9b9b9;"></div>
<div class="r" style="left:464.4px;top:260.2px;width:12.2px;height:13.4px;background:#f4f4f4;border:1px solid #c4c4c4;"></div>
<svg class="r" style="left:466.2px;top:262.59999999999997px;" width="9" height="9" viewBox="0 0 9 9"><path d="M4.5 1 L7.2 4.4 H5.4 V7.8 H3.6 V4.4 H1.8 Z" fill="#333"/></svg>
<span class="t" style="left:324.2px;top:268.0px;color:#3c3c3c;transform:translate(0,-50%) scaleX(0.932);transform-origin:0 50%;font-size:7.3px;">論理式</span>
<span class="t" style="left:485.2px;top:267.9px;color:#555;transform:translate(-50%,-50%);transform-origin:50% 50%;font-size:7.6px;">=</span>
<div class="r" style="left:350.1px;top:275.8px;width:114.4px;height:13.4px;background:#fff;border:1px solid #b9b9b9;"></div>
<div class="r" style="left:464.4px;top:275.8px;width:12.2px;height:13.4px;background:#f4f4f4;border:1px solid #5b9bd5;"></div>
<svg class="r" style="left:466.2px;top:278.2px;" width="9" height="9" viewBox="0 0 9 9"><path d="M4.5 1 L7.2 4.4 H5.4 V7.8 H3.6 V4.4 H1.8 Z" fill="#333"/></svg>
<span class="t" style="left:305.6px;top:283.6px;color:#3c3c3c;transform:translate(0,-50%) scaleX(0.891);transform-origin:0 50%;font-size:7.3px;">値が真の場合</span>
<span class="t" style="left:485.2px;top:283.5px;color:#555;transform:translate(-50%,-50%);transform-origin:50% 50%;font-size:7.6px;">=</span>
<div class="r" style="left:350.1px;top:291.4px;width:114.4px;height:13.4px;background:#fff;border:1px solid #b9b9b9;"></div>
<div class="r" style="left:464.4px;top:291.4px;width:12.2px;height:13.4px;background:#f4f4f4;border:1px solid #c4c4c4;"></div>
<svg class="r" style="left:466.2px;top:293.79999999999995px;" width="9" height="9" viewBox="0 0 9 9"><path d="M4.5 1 L7.2 4.4 H5.4 V7.8 H3.6 V4.4 H1.8 Z" fill="#333"/></svg>
<span class="t" style="left:305.6px;top:299.2px;color:#3c3c3c;transform:translate(0,-50%) scaleX(0.891);transform-origin:0 50%;font-size:7.3px;">値が偽の場合</span>
<span class="t" style="left:485.2px;top:299.09999999999997px;color:#555;transform:translate(-50%,-50%);transform-origin:50% 50%;font-size:7.6px;">=</span>
<span class="t" style="left:352px;top:266.7px;color:#333;transform:translate(0,-50%) scaleX(1.036);transform-origin:0 50%;font-size:7.6px;">C2&gt;=80</span>
<div class="r" style="left:380.6px;top:262px;width:0.8px;height:10px;background:#222;"></div>
<span class="t" style="left:493.6px;top:268px;color:#333;transform:translate(0,-50%) scaleX(0.898);transform-origin:0 50%;font-size:7.3px;">FALSE</span>
<span class="t" style="left:493.6px;top:283.6px;color:#b4b4b4;transform:translate(0,-50%) scaleX(0.730);transform-origin:0 50%;font-size:7.3px;">すべて</span>
<span class="t" style="left:493.6px;top:299.2px;color:#b4b4b4;transform:translate(0,-50%) scaleX(0.730);transform-origin:0 50%;font-size:7.3px;">すべて</span>
<span class="t" style="left:485.2px;top:317.6px;color:#555;transform:translate(-50%,-50%);transform-origin:50% 50%;font-size:7.6px;">=</span>
<span class="t" style="left:272.6px;top:329px;color:#3c3c3c;transform:translate(0,-50%) scaleX(0.843);transform-origin:0 50%;font-size:7.3px;">論理式の結果 (真または偽) に応じて、指定された値を返します</span>
<span class="t" style="left:377px;top:345.2px;color:#3c3c3c;transform:translate(0,-50%) scaleX(0.812);transform-origin:0 50%;font-size:7.3px;">論理式　には結果が真または偽になる値、もしくは数式を指定します</span>
<div class="r" style="left:272px;top:373.6px;width:353px;height:1px;background:#e9e9e9;"></div>
<span class="t" style="left:272.6px;top:387.6px;color:#3c3c3c;transform:translate(0,-50%) scaleX(0.944);transform-origin:0 50%;font-size:7.3px;">数式の結果 =</span>
<span class="t" style="left:272.6px;top:407px;color:#2a6fc0;transform:translate(0,-50%) scaleX(0.838);transform-origin:0 50%;font-size:7.3px;text-decoration:underline;">この関数のヘルプ(H)</span>
<div class="r" style="left:524.2px;top:398.8px;width:47.6px;height:15px;background:#e5e5e5;border:1.4px solid #3f8fd8;"></div>
<span class="t" style="left:548px;top:407px;color:#333;transform:translate(-50%,-50%);transform-origin:50% 50%;font-size:7.5px;">OK</span>
<div class="r" style="left:578px;top:398.8px;width:47.6px;height:15px;background:#e3e3e3;border:1px solid #c6c6c6;"></div>
<span class="t" style="left:588.4px;top:407px;color:#333;transform:translate(0,-50%) scaleX(0.740);transform-origin:0 50%;font-size:7.3px;">キャンセル</span>
<div class="r" style="left:344.6px;top:269.2px;width:130px;height:29.2px;border:5.3px solid #f1000c;"></div>
<div class="r" style="left:419.9px;top:271.9px;width:14.8px;height:14.8px;background:rgba(238,80,74,.62);border-radius:50%;"></div>
<svg class="r" style="left:424px;top:273.2px;" width="7" height="12" viewBox="0 0 7 12"><path d="M1.4 1 H5.6 M3.5 1 V11 M1.4 11 H5.6" fill="none" stroke="#5e5050" stroke-width="1.3"/></svg>
<div class="r" style="left:80px;top:527.8px;width:864px;height:11.8px;background:#e6e6e6;"></div>
<div class="r" style="left:80px;top:527.6px;width:864px;height:0.8px;background:#cfcfcf;"></div>
<span class="t" style="left:92px;top:533.8px;color:#b8b8b8;transform:translate(-50%,-50%);transform-origin:50% 50%;font-size:5px;">◂</span>
<span class="t" style="left:103.6px;top:533.8px;color:#b8b8b8;transform:translate(-50%,-50%);transform-origin:50% 50%;font-size:5px;">▸</span>
<div class="r" style="left:121.9px;top:528px;width:37.5px;height:11px;background:#fff;"></div>
<div class="r" style="left:121.9px;top:538.2px;width:37.5px;height:1.2px;background:#4f9573;"></div>
<span class="t" style="left:140.6px;top:533.4px;color:#2f7d55;transform:translate(-50%,-50%);transform-origin:50% 50%;font-size:8.4px;">Sheet1</span>
<span class="t" style="left:177.6px;top:533.4px;color:#555;transform:translate(-50%,-50%);transform-origin:50% 50%;font-size:8.4px;">Sheet2</span>
<div class="r" style="left:196.2px;top:530px;width:0.8px;height:8px;background:#b0b0b0;"></div>
<svg class="r" style="left:209.9px;top:529.9px;" width="9" height="9" viewBox="0 0 9 9"><circle cx="4.5" cy="4.5" r="3.9" fill="none" stroke="#7a7a7a" stroke-width="0.7"/><path d="M4.5 2.4 V6.6 M2.4 4.5 H6.6" stroke="#7a7a7a" stroke-width="0.7"/></svg>
<div class="r" style="left:595.8px;top:531.6px;width:0.9px;height:0.9px;background:#999;"></div>
<div class="r" style="left:595.8px;top:533.8000000000001px;width:0.9px;height:0.9px;background:#999;"></div>
<div class="r" style="left:595.8px;top:536.0000000000001px;width:0.9px;height:0.9px;background:#999;"></div>
<div class="r" style="left:604px;top:529.6px;width:328.6px;height:9.6px;background:#dadada;"></div>
<div class="r" style="left:604px;top:529.6px;width:9.4px;height:9.6px;background:#fff;border:1px solid #d9d9d9;"></div>
<div class="r" style="left:613.6px;top:529.6px;width:294px;height:9.6px;background:#fff;border:1px solid #d2d2d2;"></div>
<div class="r" style="left:923px;top:529.6px;width:9.6px;height:9.6px;background:#fff;border:1px solid #d9d9d9;"></div>
<span class="t" style="left:608.6px;top:534.4px;color:#666;transform:translate(-50%,-50%) scaleX(0.8);transform-origin:50% 50%;font-size:4.4px;">◀</span>
<span class="t" style="left:928px;top:534.4px;color:#666;transform:translate(-50%,-50%) scaleX(0.8);transform-origin:50% 50%;font-size:4.4px;">▶</span>
<div class="r" style="left:80px;top:539.6px;width:864px;height:13.3px;background:#f3f3f3;"></div>
<span class="t" style="left:84.6px;top:546.4px;color:#444;transform:translate(0,-50%) scaleX(0.914);transform-origin:0 50%;font-size:7px;">編集</span>
<svg class="r" style="left:720.6px;top:542.4px;" width="9" height="9" viewBox="0 0 9 9"><rect x="0.5" y="0.8" width="7" height="4.8" fill="#555"/><path d="M2 7 H6 M4 5.6 V7" stroke="#555" stroke-width="0.9"/><circle cx="7" cy="6.6" r="1.7" fill="#555" stroke="#f3f3f3" stroke-width="0.5"/></svg>
<span class="t" style="left:730.6px;top:546.6px;color:#444;transform:translate(0,-50%) scaleX(0.979);transform-origin:0 50%;font-size:7px;">表示設定</span>
<svg class="r" style="left:776px;top:542.6px;" width="8" height="8" viewBox="0 0 8 8"><path d="M0.5 0.5 H7.5 V7.5 H0.5 Z M0.5 2.8 H7.5 M0.5 5.2 H7.5 M2.8 0.5 V7.5 M5.2 0.5 V7.5" fill="none" stroke="#9a9a9a" stroke-width="0.6"/></svg>
<svg class="r" style="left:799px;top:542.6px;" width="8" height="8" viewBox="0 0 8 8"><path d="M0.5 0.5 H7.5 V7.5 H0.5 Z M2.2 2 H5.8 V6 H2.2 Z" fill="none" stroke="#9a9a9a" stroke-width="0.6"/></svg>
<svg class="r" style="left:822px;top:542.6px;" width="8" height="8" viewBox="0 0 8 8"><path d="M0.5 0.5 H7.5 V7.5 H0.5 Z M0.5 4.2 H4.2 V0.5" fill="none" stroke="#9a9a9a" stroke-width="0.6"/></svg>
<span class="t" style="left:842px;top:546.2px;color:#b0b0b0;transform:translate(-50%,-50%);transform-origin:50% 50%;font-size:7px;">−</span>
<div class="r" style="left:848px;top:546.1px;width:57px;height:0.7px;background:#c6c6c6;"></div>
<div class="r" style="left:876.2px;top:543.6px;width:1px;height:5.4px;background:#bdbdbd;"></div>
<span class="t" style="left:910.4px;top:546.2px;color:#b0b0b0;transform:translate(-50%,-50%);transform-origin:50% 50%;font-size:7px;">+</span>
<span class="t" style="left:920.6px;top:546.6px;color:#b9b9b9;transform:translate(0,-50%) scaleX(1.061);transform-origin:0 50%;font-size:7px;">100%</span>
<div class="r" style="left:80px;top:552.9px;width:864px;height:23.1px;background:#1c2f3c;"></div>
<svg class="r" style="left:89px;top:559.4px;" width="11" height="11" viewBox="0 0 11 11"><path d="M0.5 1.8 L4.8 1.2 V5.2 H0.5 Z M5.6 1.1 L10.5 0.4 V5.2 H5.6 Z M0.5 6 H4.8 V10 L0.5 9.4 Z M5.6 6 H10.5 V10.8 L5.6 10.1 Z" fill="#fff"/></svg>
<div class="r" style="left:107.8px;top:553px;width:197.4px;height:23px;background:#f2f2f2;"></div>
<svg class="r" style="left:114.6px;top:559.6px;" width="10" height="10" viewBox="0 0 10 10"><circle cx="6" cy="3.8" r="2.9" fill="none" stroke="#333" stroke-width="1"/><path d="M3.9 6 L0.8 9.2" stroke="#333" stroke-width="1.1"/></svg>
<span class="t" style="left:130.6px;top:565px;color:#444;transform:translate(0,-50%) scaleX(0.848);transform-origin:0 50%;font-size:8.6px;">ここに入力して検索</span>
<svg class="r" style="left:313.6px;top:559.4px;" width="11" height="11" viewBox="0 0 11 11"><circle cx="5.5" cy="5.5" r="3.6" fill="none" stroke="#f2f2f2" stroke-width="1.3"/></svg>
<svg class="r" style="left:340.6px;top:560px;" width="12" height="10" viewBox="0 0 12 10"><path d="M0.6 1.6 H6.4 V8 H0.6 Z M8 1.6 V8 M10.4 2.4 V3.2 M10.4 6.4 V7.2 M0.6 0.4 V0.8 M6.4 0.4 V0.8 M0.6 8.8 V9.4 M6.4 8.8 V9.4" fill="none" stroke="#e8e8e8" stroke-width="0.9"/></svg>
<svg class="r" style="left:369.6px;top:559.2px;" width="13" height="12" viewBox="0 0 13 12"><path d="M0.6 1.2 H5 L6.2 2.6 H12.4 V10.8 H0.6 Z" fill="#f4c542"/><path d="M0.6 4.6 H12.4 V10.8 H0.6 Z" fill="#3c8fd8"/><path d="M3.4 7.4 H9.6 V10.8 H3.4 Z" fill="#f6d66a"/></svg>
<svg class="r" style="left:398.8px;top:559.4px;" width="13" height="12" viewBox="0 0 13 12"><rect x="0.4" y="0.6" width="12" height="10.6" fill="#1d6fc4"/><path d="M0.4 11.2 L5 4.6 L8 8.4 L9.6 6.8 L12.4 11.2 Z" fill="#8fd0f6"/><circle cx="9.6" cy="3.4" r="1.2" fill="#d7efff"/></svg>
<svg class="r" style="left:427.4px;top:558.6px;" width="13" height="13" viewBox="0 0 13 13"><path d="M4 3.6 V2 Q4 0.8 5.2 0.8 H7.8 Q9 0.8 9 2 V3.6" fill="none" stroke="#f2f2f2" stroke-width="0.9"/><rect x="0.8" y="3.6" width="11.4" height="8.8" fill="#f4f4f4"/><rect x="4.2" y="5.6" width="2" height="2" fill="#e8503a"/><rect x="6.8" y="5.6" width="2" height="2" fill="#7db83a"/><rect x="4.2" y="8.2" width="2" height="2" fill="#2c9be0"/><rect x="6.8" y="8.2" width="2" height="2" fill="#f6b92c"/></svg>
<svg class="r" style="left:455.4px;top:558.8px;" width="13" height="13" viewBox="0 0 13 13"><defs><linearGradient id="eg" x1="0" y1="1" x2="1" y2="0"><stop offset="0" stop-color="#1568c8"/><stop offset="0.55" stop-color="#1b9be0"/><stop offset="1" stop-color="#4fd67a"/></linearGradient></defs><circle cx="6.5" cy="6.5" r="5.9" fill="url(#eg)"/><path d="M12.4 6.4 Q9.6 3 6.4 4.6 Q4 6.4 5.4 9.4 Q7.6 12 11 10.4 Q8.4 10.6 7.6 8.4 Q7.4 7 8.6 6.8 Q10.4 6.6 10.6 8 Q12.2 7.6 12.4 6.4 Z" fill="#1c2f3c" opacity=".82"/></svg>
<svg class="r" style="left:484.6px;top:559.2px;" width="12" height="12" viewBox="0 0 12 12"><path d="M3.4 1 L11 2.2 L8.8 10.8 L1 9.6 Z" fill="#cfe3f6"/><path d="M4.6 2.4 L10 3.2 L8.2 9.4 L2.6 8.6 Z" fill="#6aa2e0"/></svg>
<div class="r" style="left:512.7px;top:558.2px;width:12.8px;height:12.8px;background:#f7ea1a;border-radius:50%;"></div>
<div class="r" style="left:508.2px;top:574.6px;width:23px;height:1.4px;background:#9ccaf0;"></div>
<svg class="r" style="left:540.6px;top:558.6px;" width="13" height="13" viewBox="0 0 13 13"><path d="M6.4 6.4 L2.4 1 L7 2.8 Z M6.4 6.4 L11.8 2.4 L10 7 Z M6.4 6.4 L10.6 11.8 L5.8 10 Z M6.4 6.4 L1 10.4 L2.8 5.8 Z" fill="#cfe0f4"/><path d="M6.4 6.4 L7 2.8 L9.6 1.4 Z M6.4 6.4 L2.8 5.8 L1.2 3.2 Z" fill="#8fb2e0"/></svg>
<svg class="r" style="left:570px;top:557.6px;" width="14" height="13" viewBox="0 0 14 13"><path d="M0.4 4.6 L7 0.6 L13.6 4.6 V12.4 H0.4 Z" fill="#1a86dc"/><path d="M1.4 5 L7 9 L12.6 5 L7 2 Z" fill="#e9f4fd"/><path d="M0.4 4.8 L7 9.6 L13.6 4.8 V12.4 H0.4 Z" fill="#1a86dc"/><path d="M0.4 4.8 L7 9.6 L13.6 4.8" fill="none" stroke="#6ab6ee" stroke-width="0.6"/></svg>
<svg class="r" style="left:599.4px;top:558.8px;" width="12" height="13" viewBox="0 0 12 13"><rect x="0.6" y="0.6" width="10.8" height="11.8" rx="1" fill="#26323a"/><path d="M3.6 3.2 L7.4 6.4 L3.6 9.8" fill="none" stroke="#4fd1b0" stroke-width="1.6"/></svg>
<div class="r" style="left:621px;top:553.2px;width:27.8px;height:22.8px;background:#3d4f5b;"></div>
<div class="r" style="left:621px;top:574.4px;width:27.8px;height:1.6px;background:#9ccaf0;"></div>
<div class="r" style="left:594.4px;top:574.6px;width:22.8px;height:1.4px;background:#7fb6e6;"></div>
<svg class="r" style="left:628px;top:558.6px;" width="14" height="13" viewBox="0 0 14 13"><rect x="4.2" y="1" width="9.2" height="11" fill="#2f9a62"/><path d="M4.2 4.6 H13.4 M4.2 8.2 H13.4 M8.8 1 V12" stroke="#1b6b42" stroke-width="0.7"/><rect x="0.6" y="3" width="7.4" height="7.4" fill="#16693f"/><path d="M2.6 4.8 L6 8.6 M6 4.8 L2.6 8.6" stroke="#fff" stroke-width="1"/></svg>
<svg class="r" style="left:655.6px;top:558.8px;" width="15" height="13" viewBox="0 0 15 13"><rect x="0.6" y="1" width="11" height="8" rx="1" fill="#3b9be6"/><path d="M11.6 3.6 L14.4 2 V8 L11.6 6.4 Z" fill="#3b9be6"/><circle cx="6" cy="5" r="2.4" fill="#e8eef4"/><circle cx="6" cy="5" r="1.2" fill="#e23b3b"/><path d="M3.6 9 L2.4 12 M8.4 9 L9.6 12" stroke="#9ec8ee" stroke-width="0.9"/></svg>
<div class="r" style="left:652.4px;top:574.6px;width:22.4px;height:1.4px;background:#7fb6e6;"></div>
<svg class="r" style="left:708.4px;top:561.6px;" width="8" height="6" viewBox="0 0 8 6"><path d="M0.8 4.8 L4 1.4 L7.2 4.8" fill="none" stroke="#d8d8d8" stroke-width="0.9"/></svg>
<svg class="r" style="left:724.6px;top:560px;" width="10" height="9" viewBox="0 0 10 9"><path d="M0.6 3.2 H2.4 L4.6 1.2 V7.8 L2.4 5.8 H0.6 Z" fill="none" stroke="#cfcfcf" stroke-width="0.8"/><path d="M6 3 Q7 4.5 6 6 M7.4 2 Q9 4.5 7.4 7" fill="none" stroke="#bdbdbd" stroke-width="0.7"/></svg>
<svg class="r" style="left:744.4px;top:559.4px;" width="11" height="10" viewBox="0 0 11 10"><path d="M0.6 1.4 H6 V6.4 H0.6 Z M2 8.4 H4.8 M6 3.4 H9.6 V9 H6" fill="none" stroke="#c9c9c9" stroke-width="0.8"/></svg>
<div class="r" style="left:764.4px;top:564.8px;width:8.6px;height:3.2px;background:#e9eef2;"></div>
<div class="r" style="left:786px;top:565.6px;width:3.6px;height:3.6px;background:#e4473b;border-radius:50%;"></div>
<svg class="r" style="left:800.4px;top:559.6px;" width="9" height="10" viewBox="0 0 9 10"><rect x="0.6" y="2.4" width="6" height="6" fill="none" stroke="#8f9aa2" stroke-width="0.8"/><path d="M7.4 1 V9" stroke="#8f9aa2" stroke-width="0.8"/></svg>
<svg class="r" style="left:819.4px;top:559.6px;" width="9" height="10" viewBox="0 0 9 10"><path d="M1.4 0.8 Q0.6 6 2.6 9 M4 2 V8 M6.4 0.8 Q7.6 6 6 9" fill="none" stroke="#9aa4ab" stroke-width="0.8"/></svg>
<svg class="r" style="left:838.4px;top:559.6px;" width="8" height="10" viewBox="0 0 8 10"><path d="M2 1 V9 M5.6 1 V9" stroke="#aab2b8" stroke-width="0.9"/></svg>
<svg class="r" style="left:852.6px;top:559.8px;" width="13" height="11" viewBox="0 0 13 11"><path d="M1 6 Q4 1 8.6 3 L11 6.6 L5 8.6 Z" fill="#e6edf3"/><circle cx="5" cy="6" r="2.6" fill="#2d7fe0"/><circle cx="10" cy="7.6" r="1.5" fill="#d9463a"/></svg>
<span class="t" style="left:754.8px;top:561.4px;color:#e4e8eb;transform:translate(0,-50%) scaleX(0.953);transform-origin:0 50%;font-size:16.5px;">©</span>
<span class="t" style="left:770.8px;top:561.4px;color:#e4e8eb;transform:translate(0,-50%) scaleX(0.935);transform-origin:0 50%;font-size:17.6px;">2021</span>
<span class="t" style="left:814px;top:561.4px;color:#e4e8eb;transform:translate(0,-50%) scaleX(0.822);transform-origin:0 50%;font-size:17.6px;">saym.</span>
<span class="t" style="left:883.6px;top:560.2px;color:#f2f2f2;transform:translate(0,-50%) scaleX(0.913);transform-origin:0 50%;font-size:7px;">10:53</span>
<span class="t" style="left:873.4px;top:569.9px;color:#f2f2f2;transform:translate(0,-50%) scaleX(1.016);transform-origin:0 50%;font-size:7px;">2021/05/21</span>
<svg class="r" style="left:919.4px;top:558.8px;" width="12" height="12" viewBox="0 0 12 12"><path d="M0.8 1 H10.6 V8.2 H6.6 L4.6 10.4 V8.2 H0.8 Z" fill="#f4f4f4"/><path d="M2.6 3.2 H8.8 M2.6 5.2 H8.8" stroke="#33424e" stroke-width="0.8"/><path d="M8 9.6 L10.8 7" stroke="#c9c9c9" stroke-width="0.9"/></svg>
</div></body></html>
